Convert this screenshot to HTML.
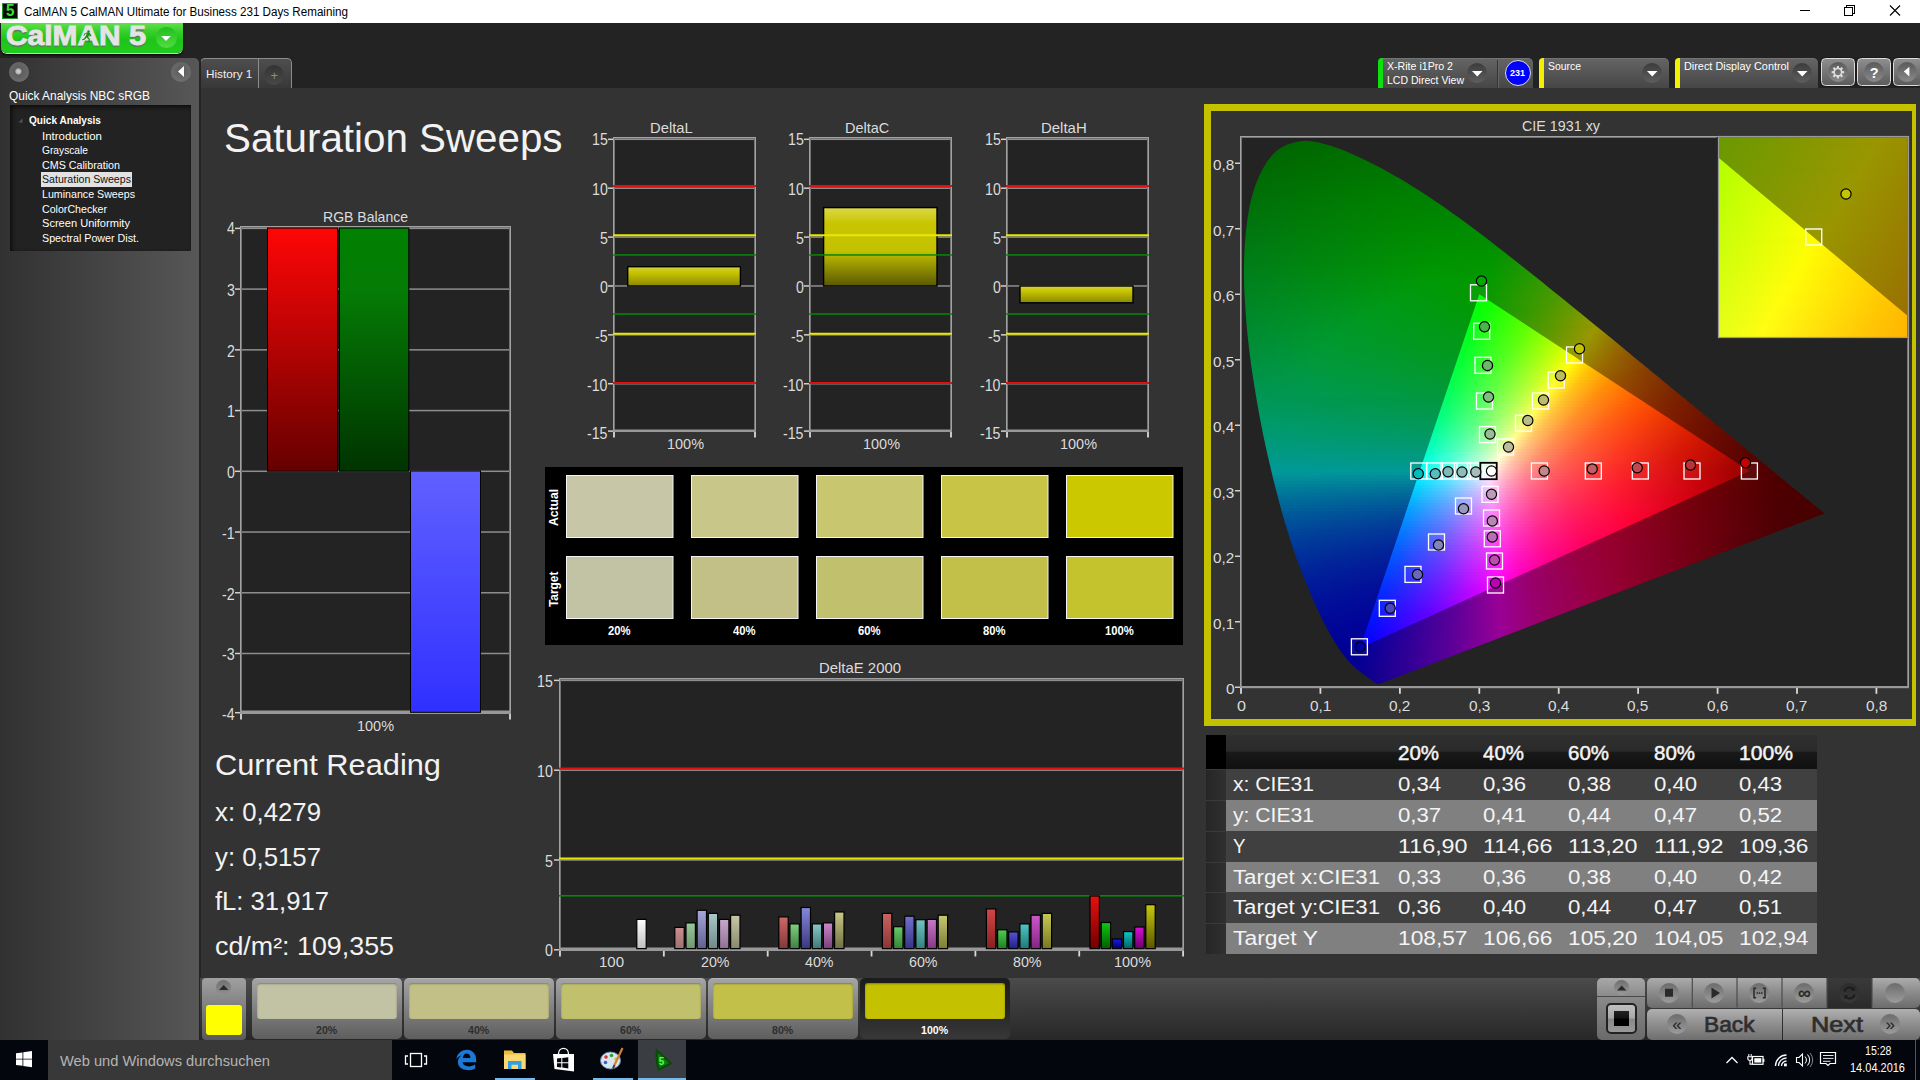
<!DOCTYPE html>
<html lang="en"><head><meta charset="utf-8"><title>CalMAN 5 Saturation Sweeps</title>
<style>
html,body{margin:0;padding:0;overflow:hidden;}
html{width:1920px;height:1080px;}
body{width:1920px;height:1080px;overflow:hidden;position:relative;background:#333333;font-family:"Liberation Sans",sans-serif;}
.t{position:absolute;white-space:nowrap;line-height:1;transform-origin:0 0;display:block;}
div{box-sizing:border-box;}
svg{position:absolute;left:0;top:0;overflow:visible;}
</style></head>
<body>
<div style="position:absolute;left:0px;top:0px;width:1920px;height:23px;background:#ffffff;"></div>
<div style="position:absolute;left:2px;top:3px;width:16px;height:16px;background:#0a0a0a;border:1px solid #1c9a1c;"><span class="t" style="left:2.5px;top:-1.5px;font-size:16px;font-weight:bold;color:#35e035;transform:scaleX(0.95);">5</span></div>
<span class="t" style="left:23.50px;top:5.59px;font-size:12.3px;color:#000;transform:scaleX(0.9461);">CalMAN 5 CalMAN Ultimate for Business 231 Days Remaining</span>
<svg width="1920" height="23" viewBox="0 0 1920 23"><g stroke="#000" stroke-width="1" fill="none" shape-rendering="crispEdges"><path d="M1799.5 10.5h10"/><path d="M1844.5 7.5h8v8h-8z M1846.5 7.5v-2h8v8h-2"/></g><path d="M1890 5.5l10 10M1900 5.5l-10 10" stroke="#000" stroke-width="1.1" fill="none"/></svg>
<div style="position:absolute;left:0px;top:23px;width:1920px;height:65px;background:#232323;"></div>
<div style="position:absolute;left:1px;top:23px;width:182px;height:30px;background:linear-gradient(#5fe04c 0%,#36cf2a 30%,#1ec41a 55%,#22cc1e 100%);border-radius:0 0 6px 6px;box-shadow:0 1px 0 #b8e8b0, 0 2px 2px #000;"></div>
<span class="t" style="left:6.40px;top:20.84px;font-size:28.3px;color:#e4e4e4;transform:scaleX(1.0563);font-weight:bold;-webkit-text-stroke:0.9px #e4e4e4;text-shadow:0 1.5px 1px #5a7a5a;">CalMAN</span>
<span class="t" style="left:129.00px;top:20.84px;font-size:28.3px;color:#e4e4e4;transform:scaleX(1.0928);font-weight:bold;-webkit-text-stroke:0.9px #e4e4e4;text-shadow:0 1.5px 1px #5a7a5a;">5</span>
<svg width="200" height="60"><path d="M88.5 30.2a1.3 1.3 0 1 0 .1 0zM84.5 33.5l3-1.2 2.5 1 1.5 2.5 -1 .5 -1.3-1.8 -1.2 2.2 2 2.5 -.8 3 -1-.3 .5-2.5 -2-1.8 -1.8 2 -2.6 .6 -.2-1 2-.7 2.3-3.6 .4-1.5 -1.6.6 -.9 1.8 -.9-.4z" fill="#1d8a18"/></svg>
<div style="position:absolute;left:156px;top:27px;width:20.5px;height:20.5px;border-radius:50%;background:linear-gradient(#1fbf1a,#52dc42);"></div>
<svg width="200" height="60"><path d="M161.2 36h9.6l-4.8 5z" fill="#fff"/></svg>
<div style="position:absolute;left:200px;top:58px;width:92px;height:30px;background:linear-gradient(#4e4e4e,#383838);border:1px solid #8c8c8c;border-bottom:none;border-radius:5px 5px 0 0;"></div>
<div style="position:absolute;left:258px;top:59px;width:1px;height:29px;background:#8c8c8c;"></div>
<span class="t" style="left:206.40px;top:68.38px;font-size:11.6px;color:#f0f0f0;transform:scaleX(1.0118);">History 1</span>
<div style="position:absolute;left:264.2px;top:65.2px;width:20px;height:20px;border-radius:50%;background:linear-gradient(#343434,#484848);"></div>
<span class="t" style="left:270.40px;top:69.00px;font-size:13px;color:#8c8c8c;transform:scaleX(1.0000);">+</span>
<div style="position:absolute;left:1378px;top:58px;width:155px;height:30px;background:linear-gradient(#646464,#464646);border-radius:5px 5px 0 0;border-top:1px solid #747474;"></div><div style="position:absolute;left:1378px;top:58px;width:5.3px;height:30px;background:#0ee00e;border-radius:4px 0 0 0;"></div><div style="position:absolute;left:1467px;top:63px;width:20px;height:20px;border-radius:50%;background:linear-gradient(#3c3c3c,#5e5e5e);"></div><svg width="1920" height="100"><path d="M1472 71h10.500l-5.250 5.500z" fill="#fff"/></svg>
<div style="position:absolute;left:1497px;top:60px;width:1px;height:28px;background:#333;"></div><div style="position:absolute;left:1498px;top:60px;width:1px;height:28px;background:#666;"></div>
<span class="t" style="left:1387.00px;top:61.27px;font-size:11.5px;color:#fff;transform:scaleX(0.9221);">X-Rite i1Pro 2</span>
<span class="t" style="left:1387.00px;top:75.27px;font-size:11.5px;color:#fff;transform:scaleX(0.9151);">LCD Direct View</span>
<div style="position:absolute;left:1504.5px;top:60px;width:26px;height:26px;border-radius:50%;background:#0000ff;border:1px solid #ddd;"></div>
<span class="t" style="left:1510.07px;top:68.46px;font-size:9.5px;color:#fff;transform:scaleX(0.9500);font-weight:bold;">231</span>
<div style="position:absolute;left:1539px;top:58px;width:130px;height:30px;background:linear-gradient(#646464,#464646);border-radius:5px 5px 0 0;border-top:1px solid #747474;"></div><div style="position:absolute;left:1539px;top:58px;width:5.3px;height:30px;background:#f2f200;border-radius:4px 0 0 0;"></div><div style="position:absolute;left:1642px;top:63px;width:20px;height:20px;border-radius:50%;background:linear-gradient(#3c3c3c,#5e5e5e);"></div><svg width="1920" height="100"><path d="M1647 71h10.500l-5.250 5.500z" fill="#fff"/></svg>
<span class="t" style="left:1547.50px;top:61.27px;font-size:11.5px;color:#fff;transform:scaleX(0.9058);">Source</span>
<div style="position:absolute;left:1675px;top:58px;width:143px;height:30px;background:linear-gradient(#646464,#464646);border-radius:5px 5px 0 0;border-top:1px solid #747474;"></div><div style="position:absolute;left:1675px;top:58px;width:5.3px;height:30px;background:#f2f200;border-radius:4px 0 0 0;"></div><div style="position:absolute;left:1792px;top:63px;width:20px;height:20px;border-radius:50%;background:linear-gradient(#3c3c3c,#5e5e5e);"></div><svg width="1920" height="100"><path d="M1797 71h10.500l-5.250 5.500z" fill="#fff"/></svg>
<span class="t" style="left:1683.50px;top:61.27px;font-size:11.5px;color:#fff;transform:scaleX(0.9444);">Direct Display Control</span>
<div style="position:absolute;left:1821px;top:58px;width:34px;height:28.3px;background:linear-gradient(#8e8e8e,#5c5c5c);border:1px solid #dcdcdc;border-radius:4.5px;box-shadow:0 0 0 1px #1a1a1a;"></div>
<div style="position:absolute;left:1828px;top:62px;width:20px;height:20px;border-radius:50%;background:linear-gradient(#5a5a5a,#8a8a8a);"></div>
<div style="position:absolute;left:1857px;top:58px;width:34px;height:28.3px;background:linear-gradient(#8e8e8e,#5c5c5c);border:1px solid #dcdcdc;border-radius:4.5px;box-shadow:0 0 0 1px #1a1a1a;"></div>
<div style="position:absolute;left:1864px;top:62px;width:20px;height:20px;border-radius:50%;background:linear-gradient(#5a5a5a,#8a8a8a);"></div>
<div style="position:absolute;left:1893px;top:58px;width:30px;height:28.3px;background:linear-gradient(#8e8e8e,#5c5c5c);border:1px solid #dcdcdc;border-radius:4.5px;box-shadow:0 0 0 1px #1a1a1a;"></div>
<div style="position:absolute;left:1896.8px;top:62px;width:20px;height:20px;border-radius:50%;background:linear-gradient(#5a5a5a,#8a8a8a);"></div>
<svg width="1920" height="100"><path fill-rule="evenodd" d="M1844.22 71.18L1844.22 73.22L1842.36 73.34L1841.86 74.55L1843.09 75.95L1841.65 77.39L1840.25 76.16L1839.04 76.66L1838.92 78.52L1836.88 78.52L1836.76 76.66L1835.55 76.16L1834.15 77.39L1832.71 75.95L1833.94 74.55L1833.44 73.34L1831.58 73.22L1831.58 71.18L1833.44 71.06L1833.94 69.85L1832.71 68.45L1834.15 67.01L1835.55 68.24L1836.76 67.74L1836.88 65.88L1838.92 65.88L1839.04 67.74L1840.25 68.24L1841.65 67.01L1843.09 68.45L1841.86 69.85L1842.36 71.06ZM1840.80 72.20a2.9 2.9 0 1 0 -5.8 0a2.9 2.9 0 1 0 5.8 0Z" fill="#dcdcdc"/><path d="M1909.4 66.8v9.6l-5.6-4.800z" fill="#fff"/></svg>
<span class="t" style="left:1869.77px;top:65.73px;font-size:14.5px;color:#fff;transform:scaleX(1.0000);font-weight:bold;">?</span>
<div style="position:absolute;left:199px;top:58px;width:2px;height:982px;background:#242424;"></div>
<div style="position:absolute;left:0px;top:58px;width:199px;height:982px;background:linear-gradient(90deg,#313131,#575757);border-radius:0 5px 0 0;"></div>
<div style="position:absolute;left:9px;top:62px;width:20px;height:20px;border-radius:50%;background:radial-gradient(circle at 47% 47%,#d8d8d8 0,#b0b0b0 17%,#5e5e5e 24%,#686868 60%,#7a7a7a 100%);"></div>
<div style="position:absolute;left:171px;top:62px;width:20px;height:20px;border-radius:50%;background:radial-gradient(circle at 50% 40%,#5a5a5a,#777);"></div>
<svg width="200" height="100"><path d="M184 66v11l-6-5.5z" fill="#fff"/></svg>
<span class="t" style="left:9.30px;top:90.34px;font-size:12px;color:#fff;transform:scaleX(0.9925);">Quick Analysis NBC sRGB</span>
<div style="position:absolute;left:9.5px;top:105.3px;width:181px;height:146px;background:#222222;box-shadow:inset 2px 2px 4px #0c0c0c;"></div>
<svg width="200" height="300"><path d="M22.5 118.5v4h-4z" fill="#555"/></svg>
<span class="t" style="left:29.00px;top:115.26px;font-size:10.8px;color:#fff;transform:scaleX(0.9344);font-weight:bold;">Quick Analysis</span>
<span class="t" style="left:42.00px;top:130.56px;font-size:10.8px;color:#fff;transform:scaleX(1.0629);">Introduction</span>
<span class="t" style="left:42.00px;top:145.16px;font-size:10.8px;color:#fff;transform:scaleX(0.9461);">Grayscale</span>
<span class="t" style="left:42.00px;top:159.76px;font-size:10.8px;color:#fff;transform:scaleX(0.9920);">CMS Calibration</span>
<div style="position:absolute;left:41px;top:172px;width:91px;height:15px;background:#e2e2e2;"></div>
<span class="t" style="left:42.00px;top:174.36px;font-size:10.8px;color:#111;transform:scaleX(0.9815);">Saturation Sweeps</span>
<span class="t" style="left:42.00px;top:188.96px;font-size:10.8px;color:#fff;transform:scaleX(0.9865);">Luminance Sweeps</span>
<span class="t" style="left:42.00px;top:203.56px;font-size:10.8px;color:#fff;transform:scaleX(0.9845);">ColorChecker</span>
<span class="t" style="left:42.00px;top:218.16px;font-size:10.8px;color:#fff;transform:scaleX(1.0253);">Screen Uniformity</span>
<span class="t" style="left:42.00px;top:232.76px;font-size:10.8px;color:#fff;transform:scaleX(0.9914);">Spectral Power Dist.</span>
<svg width="1920" height="1080" viewBox="0 0 1920 1080"><rect x="240" y="226" width="271" height="488" fill="#232323"/><rect x="240" y="652.74" width="271" height="1.5" fill="#8e8e8e"/><rect x="240" y="592.01" width="271" height="1.5" fill="#8e8e8e"/><rect x="240" y="531.28" width="271" height="1.5" fill="#8e8e8e"/><rect x="240" y="470.55" width="271" height="1.5" fill="#8e8e8e"/><rect x="240" y="409.82" width="271" height="1.5" fill="#8e8e8e"/><rect x="240" y="349.09" width="271" height="1.5" fill="#8e8e8e"/><rect x="240" y="288.36" width="271" height="1.5" fill="#8e8e8e"/><rect x="240" y="227.63" width="271" height="1.5" fill="#8e8e8e"/><rect x="240.5" y="226.5" width="270" height="487" fill="none" stroke="#a2a2a2" stroke-width="1"/><rect x="241.5" y="227.5" width="268" height="485" fill="none" stroke="#747474" stroke-width="1"/><rect x="240" y="710.5" width="271" height="3.5" fill="#989898"/><rect x="235" y="711.95" width="5" height="1.5" fill="#d0d0d0"/><rect x="235" y="652.74" width="5" height="1.5" fill="#d0d0d0"/><rect x="235" y="592.01" width="5" height="1.5" fill="#d0d0d0"/><rect x="235" y="531.28" width="5" height="1.5" fill="#d0d0d0"/><rect x="235" y="470.55" width="5" height="1.5" fill="#d0d0d0"/><rect x="235" y="409.82" width="5" height="1.5" fill="#d0d0d0"/><rect x="235" y="349.09" width="5" height="1.5" fill="#d0d0d0"/><rect x="235" y="288.36" width="5" height="1.5" fill="#d0d0d0"/><rect x="235" y="227.63" width="5" height="1.5" fill="#d0d0d0"/><rect x="240.10" y="714" width="1.8" height="5.5" fill="#d8d8d8"/><rect x="509.10" y="714" width="1.8" height="5.5" fill="#d8d8d8"/><defs><linearGradient id="gr" x1="0" y1="0" x2="0" y2="1"><stop offset="0" stop-color="#ff0606"/><stop offset="1" stop-color="#660000"/></linearGradient><linearGradient id="gg" x1="0" y1="0" x2="0" y2="1"><stop offset="0" stop-color="#008000"/><stop offset="0.25" stop-color="#057c05"/><stop offset="1" stop-color="#003300"/></linearGradient><linearGradient id="gb" x1="0" y1="0" x2="0" y2="1"><stop offset="0" stop-color="#6060ff"/><stop offset="1" stop-color="#3030ff"/></linearGradient><linearGradient id="gy" x1="0" y1="0" x2="0" y2="1"><stop offset="0" stop-color="#dcd94a"/><stop offset="0.2" stop-color="#c8c500"/><stop offset="0.55" stop-color="#c4c100"/><stop offset="1" stop-color="#5a5800"/></linearGradient><linearGradient id="gy2" x1="0" y1="0" x2="0" y2="1"><stop offset="0" stop-color="#d6d340"/><stop offset="0.3" stop-color="#c8c500"/><stop offset="1" stop-color="#8a8800"/></linearGradient></defs><rect x="267.5" y="228" width="70" height="243.2" fill="url(#gr)" stroke="#000" stroke-width="1"/><rect x="339.3" y="228" width="69.5" height="243.2" fill="url(#gg)" stroke="#000" stroke-width="1"/><rect x="410.5" y="471" width="70" height="241.3" fill="url(#gb)" stroke="#000" stroke-width="1"/><rect x="613" y="137" width="143" height="295" fill="#232323"/><rect x="613" y="383.00" width="143" height="1.5" fill="#8e8e8e"/><rect x="613" y="334.11" width="143" height="1.5" fill="#8e8e8e"/><rect x="613" y="285.22" width="143" height="1.5" fill="#8e8e8e"/><rect x="613" y="236.33" width="143" height="1.5" fill="#8e8e8e"/><rect x="613" y="187.44" width="143" height="1.5" fill="#8e8e8e"/><rect x="613" y="138.55" width="143" height="1.5" fill="#8e8e8e"/><rect x="613.5" y="137.5" width="142" height="294" fill="none" stroke="#a2a2a2" stroke-width="1"/><rect x="614.5" y="138.5" width="140" height="292" fill="none" stroke="#747474" stroke-width="1"/><rect x="613" y="429.5" width="143" height="2.5" fill="#989898"/><rect x="608" y="138.55" width="5" height="1.5" fill="#d0d0d0"/><rect x="608" y="187.44" width="5" height="1.5" fill="#d0d0d0"/><rect x="608" y="236.33" width="5" height="1.5" fill="#d0d0d0"/><rect x="608" y="285.22" width="5" height="1.5" fill="#d0d0d0"/><rect x="608" y="334.11" width="5" height="1.5" fill="#d0d0d0"/><rect x="608" y="383.00" width="5" height="1.5" fill="#d0d0d0"/><rect x="608" y="430.35" width="5" height="1.5" fill="#d0d0d0"/><rect x="613.10" y="432" width="1.8" height="5.5" fill="#d8d8d8"/><rect x="754.10" y="432" width="1.8" height="5.5" fill="#d8d8d8"/><rect x="627.7" y="266.7" width="112.69999999999993" height="19.30000000000001" fill="url(#gy2)" stroke="#000" stroke-width="1.4"/><rect x="613" y="185.00" width="143" height="2" fill="#e01010"/><rect x="613" y="382.00" width="143" height="2" fill="#e01010"/><rect x="613" y="234.25" width="143" height="2" fill="#e8e800"/><rect x="613" y="332.75" width="143" height="2" fill="#e8e800"/><rect x="613" y="254.20" width="143" height="1.5" fill="#088808"/><rect x="613" y="313.30" width="143" height="1.5" fill="#088808"/><rect x="809" y="137" width="143" height="295" fill="#232323"/><rect x="809" y="383.00" width="143" height="1.5" fill="#8e8e8e"/><rect x="809" y="334.11" width="143" height="1.5" fill="#8e8e8e"/><rect x="809" y="285.22" width="143" height="1.5" fill="#8e8e8e"/><rect x="809" y="236.33" width="143" height="1.5" fill="#8e8e8e"/><rect x="809" y="187.44" width="143" height="1.5" fill="#8e8e8e"/><rect x="809" y="138.55" width="143" height="1.5" fill="#8e8e8e"/><rect x="809.5" y="137.5" width="142" height="294" fill="none" stroke="#a2a2a2" stroke-width="1"/><rect x="810.5" y="138.5" width="140" height="292" fill="none" stroke="#747474" stroke-width="1"/><rect x="809" y="429.5" width="143" height="2.5" fill="#989898"/><rect x="804" y="138.55" width="5" height="1.5" fill="#d0d0d0"/><rect x="804" y="187.44" width="5" height="1.5" fill="#d0d0d0"/><rect x="804" y="236.33" width="5" height="1.5" fill="#d0d0d0"/><rect x="804" y="285.22" width="5" height="1.5" fill="#d0d0d0"/><rect x="804" y="334.11" width="5" height="1.5" fill="#d0d0d0"/><rect x="804" y="383.00" width="5" height="1.5" fill="#d0d0d0"/><rect x="804" y="430.35" width="5" height="1.5" fill="#d0d0d0"/><rect x="809.10" y="432" width="1.8" height="5.5" fill="#d8d8d8"/><rect x="950.10" y="432" width="1.8" height="5.5" fill="#d8d8d8"/><rect x="823.6" y="207.6" width="113.39999999999998" height="78.4" fill="url(#gy)" stroke="#000" stroke-width="1.4"/><rect x="809" y="185.00" width="143" height="2" fill="#e01010"/><rect x="809" y="382.00" width="143" height="2" fill="#e01010"/><rect x="809" y="234.25" width="143" height="2" fill="#e8e800"/><rect x="809" y="332.75" width="143" height="2" fill="#e8e800"/><rect x="809" y="254.20" width="143" height="1.5" fill="#088808"/><rect x="809" y="313.30" width="143" height="1.5" fill="#088808"/><rect x="1006" y="137" width="143" height="295" fill="#232323"/><rect x="1006" y="383.00" width="143" height="1.5" fill="#8e8e8e"/><rect x="1006" y="334.11" width="143" height="1.5" fill="#8e8e8e"/><rect x="1006" y="285.22" width="143" height="1.5" fill="#8e8e8e"/><rect x="1006" y="236.33" width="143" height="1.5" fill="#8e8e8e"/><rect x="1006" y="187.44" width="143" height="1.5" fill="#8e8e8e"/><rect x="1006" y="138.55" width="143" height="1.5" fill="#8e8e8e"/><rect x="1006.5" y="137.5" width="142" height="294" fill="none" stroke="#a2a2a2" stroke-width="1"/><rect x="1007.5" y="138.5" width="140" height="292" fill="none" stroke="#747474" stroke-width="1"/><rect x="1006" y="429.5" width="143" height="2.5" fill="#989898"/><rect x="1001" y="138.55" width="5" height="1.5" fill="#d0d0d0"/><rect x="1001" y="187.44" width="5" height="1.5" fill="#d0d0d0"/><rect x="1001" y="236.33" width="5" height="1.5" fill="#d0d0d0"/><rect x="1001" y="285.22" width="5" height="1.5" fill="#d0d0d0"/><rect x="1001" y="334.11" width="5" height="1.5" fill="#d0d0d0"/><rect x="1001" y="383.00" width="5" height="1.5" fill="#d0d0d0"/><rect x="1001" y="430.35" width="5" height="1.5" fill="#d0d0d0"/><rect x="1006.10" y="432" width="1.8" height="5.5" fill="#d8d8d8"/><rect x="1147.10" y="432" width="1.8" height="5.5" fill="#d8d8d8"/><rect x="1020" y="286" width="113" height="16.80000000000001" fill="url(#gy2)" stroke="#000" stroke-width="1.4"/><rect x="1006" y="185.00" width="143" height="2" fill="#e01010"/><rect x="1006" y="382.00" width="143" height="2" fill="#e01010"/><rect x="1006" y="234.25" width="143" height="2" fill="#e8e800"/><rect x="1006" y="332.75" width="143" height="2" fill="#e8e800"/><rect x="1006" y="254.20" width="143" height="1.5" fill="#088808"/><rect x="1006" y="313.30" width="143" height="1.5" fill="#088808"/><rect x="545" y="467" width="638" height="178" fill="#000"/><rect x="566.5" y="475.5" width="106.5" height="62" fill="#c7c7a8" stroke="#f4f4f4" stroke-width="1"/><rect x="566.5" y="556.5" width="106.5" height="62" fill="#c2c2a4" stroke="#f4f4f4" stroke-width="1"/><rect x="691.5" y="475.5" width="106.5" height="62" fill="#c8c688" stroke="#f4f4f4" stroke-width="1"/><rect x="691.5" y="556.5" width="106.5" height="62" fill="#c2c086" stroke="#f4f4f4" stroke-width="1"/><rect x="816.5" y="475.5" width="106.5" height="62" fill="#c8c66e" stroke="#f4f4f4" stroke-width="1"/><rect x="816.5" y="556.5" width="106.5" height="62" fill="#c1c06c" stroke="#f4f4f4" stroke-width="1"/><rect x="941.5" y="475.5" width="106.5" height="62" fill="#c8c446" stroke="#f4f4f4" stroke-width="1"/><rect x="941.5" y="556.5" width="106.5" height="62" fill="#c2c048" stroke="#f4f4f4" stroke-width="1"/><rect x="1066.5" y="475.5" width="106.5" height="62" fill="#cbc800" stroke="#f4f4f4" stroke-width="1"/><rect x="1066.5" y="556.5" width="106.5" height="62" fill="#c4c22d" stroke="#f4f4f4" stroke-width="1"/><rect x="559" y="678" width="625" height="273" fill="#232323"/><rect x="559" y="679.65" width="625" height="1.5" fill="#8e8e8e"/><rect x="559" y="769.45" width="625" height="1.5" fill="#8e8e8e"/><rect x="559" y="859.25" width="625" height="1.5" fill="#8e8e8e"/><rect x="559.5" y="678.5" width="624" height="272" fill="none" stroke="#a2a2a2" stroke-width="1"/><rect x="560.5" y="679.5" width="622" height="270" fill="none" stroke="#747474" stroke-width="1"/><rect x="559" y="947.5" width="625" height="3.5" fill="#989898"/><rect x="554" y="679.65" width="5" height="1.5" fill="#d0d0d0"/><rect x="554" y="769.45" width="5" height="1.5" fill="#d0d0d0"/><rect x="554" y="859.25" width="5" height="1.5" fill="#d0d0d0"/><rect x="554" y="949.05" width="5" height="1.5" fill="#d0d0d0"/><rect x="559.10" y="951" width="1.8" height="5.5" fill="#d8d8d8"/><rect x="662.95" y="951" width="1.8" height="5.5" fill="#d8d8d8"/><rect x="766.80" y="951" width="1.8" height="5.5" fill="#d8d8d8"/><rect x="870.65" y="951" width="1.8" height="5.5" fill="#d8d8d8"/><rect x="974.50" y="951" width="1.8" height="5.5" fill="#d8d8d8"/><rect x="1078.35" y="951" width="1.8" height="5.5" fill="#d8d8d8"/><rect x="1182.20" y="951" width="1.8" height="5.5" fill="#d8d8d8"/><rect x="559" y="767.50" width="625" height="2" fill="#e01010"/><rect x="559" y="857.50" width="625" height="2" fill="#e8e800"/><rect x="559" y="895.00" width="625" height="1.6" fill="#088808"/><linearGradient id="b1" x1="0" y1="0" x2="0" y2="1"><stop offset="0" stop-color="#ffffff"/><stop offset="1" stop-color="#c0c0c0"/></linearGradient><rect x="636.8" y="919.4" width="9.4" height="29.2" fill="url(#b1)" stroke="#000" stroke-width="1.2"/><linearGradient id="b2" x1="0" y1="0" x2="0" y2="1"><stop offset="0" stop-color="#cc9090"/><stop offset="1" stop-color="#a07070"/></linearGradient><rect x="674.8" y="927.4" width="9.4" height="21.2" fill="url(#b2)" stroke="#000" stroke-width="1.2"/><linearGradient id="b3" x1="0" y1="0" x2="0" y2="1"><stop offset="0" stop-color="#98c898"/><stop offset="1" stop-color="#709870"/></linearGradient><rect x="686.0" y="922.9" width="9.4" height="25.7" fill="url(#b3)" stroke="#000" stroke-width="1.2"/><linearGradient id="b4" x1="0" y1="0" x2="0" y2="1"><stop offset="0" stop-color="#a8a8d8"/><stop offset="1" stop-color="#606090"/></linearGradient><rect x="697.1" y="910.3" width="9.4" height="38.3" fill="url(#b4)" stroke="#000" stroke-width="1.2"/><linearGradient id="b5" x1="0" y1="0" x2="0" y2="1"><stop offset="0" stop-color="#a8c8c8"/><stop offset="1" stop-color="#708888"/></linearGradient><rect x="708.3" y="913.4" width="9.4" height="35.2" fill="url(#b5)" stroke="#000" stroke-width="1.2"/><linearGradient id="b6" x1="0" y1="0" x2="0" y2="1"><stop offset="0" stop-color="#c8a8cc"/><stop offset="1" stop-color="#907094"/></linearGradient><rect x="719.5" y="919.4" width="9.4" height="29.2" fill="url(#b6)" stroke="#000" stroke-width="1.2"/><linearGradient id="b7" x1="0" y1="0" x2="0" y2="1"><stop offset="0" stop-color="#c8c8a8"/><stop offset="1" stop-color="#88886c"/></linearGradient><rect x="730.6" y="915.2" width="9.4" height="33.4" fill="url(#b7)" stroke="#000" stroke-width="1.2"/><linearGradient id="b8" x1="0" y1="0" x2="0" y2="1"><stop offset="0" stop-color="#d06868"/><stop offset="1" stop-color="#803838"/></linearGradient><rect x="778.8" y="916.9" width="9.4" height="31.7" fill="url(#b8)" stroke="#000" stroke-width="1.2"/><linearGradient id="b9" x1="0" y1="0" x2="0" y2="1"><stop offset="0" stop-color="#80d080"/><stop offset="1" stop-color="#408040"/></linearGradient><rect x="789.9" y="923.9" width="9.4" height="24.7" fill="url(#b9)" stroke="#000" stroke-width="1.2"/><linearGradient id="b10" x1="0" y1="0" x2="0" y2="1"><stop offset="0" stop-color="#8888dc"/><stop offset="1" stop-color="#383880"/></linearGradient><rect x="801.1" y="907.5" width="9.4" height="41.1" fill="url(#b10)" stroke="#000" stroke-width="1.2"/><linearGradient id="b11" x1="0" y1="0" x2="0" y2="1"><stop offset="0" stop-color="#88c8c8"/><stop offset="1" stop-color="#407878"/></linearGradient><rect x="812.3" y="923.9" width="9.4" height="24.7" fill="url(#b11)" stroke="#000" stroke-width="1.2"/><linearGradient id="b12" x1="0" y1="0" x2="0" y2="1"><stop offset="0" stop-color="#cc88cc"/><stop offset="1" stop-color="#784078"/></linearGradient><rect x="823.4" y="922.9" width="9.4" height="25.7" fill="url(#b12)" stroke="#000" stroke-width="1.2"/><linearGradient id="b13" x1="0" y1="0" x2="0" y2="1"><stop offset="0" stop-color="#c8c888"/><stop offset="1" stop-color="#707040"/></linearGradient><rect x="834.6" y="912.0" width="9.4" height="36.6" fill="url(#b13)" stroke="#000" stroke-width="1.2"/><linearGradient id="b14" x1="0" y1="0" x2="0" y2="1"><stop offset="0" stop-color="#cc6262"/><stop offset="1" stop-color="#8a3434"/></linearGradient><rect x="882.4" y="913.4" width="9.4" height="35.2" fill="url(#b14)" stroke="#000" stroke-width="1.2"/><linearGradient id="b15" x1="0" y1="0" x2="0" y2="1"><stop offset="0" stop-color="#6aca6a"/><stop offset="1" stop-color="#348434"/></linearGradient><rect x="893.6" y="926.7" width="9.4" height="21.9" fill="url(#b15)" stroke="#000" stroke-width="1.2"/><linearGradient id="b16" x1="0" y1="0" x2="0" y2="1"><stop offset="0" stop-color="#7272cc"/><stop offset="1" stop-color="#34348a"/></linearGradient><rect x="904.7" y="916.2" width="9.4" height="32.4" fill="url(#b16)" stroke="#000" stroke-width="1.2"/><linearGradient id="b17" x1="0" y1="0" x2="0" y2="1"><stop offset="0" stop-color="#70c4c4"/><stop offset="1" stop-color="#348080"/></linearGradient><rect x="915.9" y="919.7" width="9.4" height="28.9" fill="url(#b17)" stroke="#000" stroke-width="1.2"/><linearGradient id="b18" x1="0" y1="0" x2="0" y2="1"><stop offset="0" stop-color="#c878c8"/><stop offset="1" stop-color="#843884"/></linearGradient><rect x="927.1" y="919.4" width="9.4" height="29.2" fill="url(#b18)" stroke="#000" stroke-width="1.2"/><linearGradient id="b19" x1="0" y1="0" x2="0" y2="1"><stop offset="0" stop-color="#c8c872"/><stop offset="1" stop-color="#7c7c34"/></linearGradient><rect x="938.2" y="915.2" width="9.4" height="33.4" fill="url(#b19)" stroke="#000" stroke-width="1.2"/><linearGradient id="b20" x1="0" y1="0" x2="0" y2="1"><stop offset="0" stop-color="#d24646"/><stop offset="1" stop-color="#8a2020"/></linearGradient><rect x="986.4" y="908.9" width="9.4" height="39.7" fill="url(#b20)" stroke="#000" stroke-width="1.2"/><linearGradient id="b21" x1="0" y1="0" x2="0" y2="1"><stop offset="0" stop-color="#50cc50"/><stop offset="1" stop-color="#208020"/></linearGradient><rect x="997.6" y="929.8" width="9.4" height="18.8" fill="url(#b21)" stroke="#000" stroke-width="1.2"/><linearGradient id="b22" x1="0" y1="0" x2="0" y2="1"><stop offset="0" stop-color="#5454d2"/><stop offset="1" stop-color="#20208a"/></linearGradient><rect x="1008.7" y="931.9" width="9.4" height="16.7" fill="url(#b22)" stroke="#000" stroke-width="1.2"/><linearGradient id="b23" x1="0" y1="0" x2="0" y2="1"><stop offset="0" stop-color="#50c6c6"/><stop offset="1" stop-color="#207878"/></linearGradient><rect x="1019.9" y="923.9" width="9.4" height="24.7" fill="url(#b23)" stroke="#000" stroke-width="1.2"/><linearGradient id="b24" x1="0" y1="0" x2="0" y2="1"><stop offset="0" stop-color="#cc58cc"/><stop offset="1" stop-color="#842484"/></linearGradient><rect x="1031.0" y="915.2" width="9.4" height="33.4" fill="url(#b24)" stroke="#000" stroke-width="1.2"/><linearGradient id="b25" x1="0" y1="0" x2="0" y2="1"><stop offset="0" stop-color="#c8c858"/><stop offset="1" stop-color="#787820"/></linearGradient><rect x="1042.2" y="913.4" width="9.4" height="35.2" fill="url(#b25)" stroke="#000" stroke-width="1.2"/><linearGradient id="b26" x1="0" y1="0" x2="0" y2="1"><stop offset="0" stop-color="#e81010"/><stop offset="1" stop-color="#700000"/></linearGradient><rect x="1090.0" y="896.0" width="9.4" height="52.6" fill="url(#b26)" stroke="#000" stroke-width="1.2"/><linearGradient id="b27" x1="0" y1="0" x2="0" y2="1"><stop offset="0" stop-color="#10c810"/><stop offset="1" stop-color="#006000"/></linearGradient><rect x="1101.2" y="922.5" width="9.4" height="26.1" fill="url(#b27)" stroke="#000" stroke-width="1.2"/><linearGradient id="b28" x1="0" y1="0" x2="0" y2="1"><stop offset="0" stop-color="#1818e8"/><stop offset="1" stop-color="#000070"/></linearGradient><rect x="1112.3" y="938.9" width="9.4" height="9.7" fill="url(#b28)" stroke="#000" stroke-width="1.2"/><linearGradient id="b29" x1="0" y1="0" x2="0" y2="1"><stop offset="0" stop-color="#10c8c8"/><stop offset="1" stop-color="#006060"/></linearGradient><rect x="1123.5" y="931.6" width="9.4" height="17.0" fill="url(#b29)" stroke="#000" stroke-width="1.2"/><linearGradient id="b30" x1="0" y1="0" x2="0" y2="1"><stop offset="0" stop-color="#d810d8"/><stop offset="1" stop-color="#680068"/></linearGradient><rect x="1134.7" y="927.0" width="9.4" height="21.6" fill="url(#b30)" stroke="#000" stroke-width="1.2"/><linearGradient id="b31" x1="0" y1="0" x2="0" y2="1"><stop offset="0" stop-color="#c8c810"/><stop offset="1" stop-color="#585800"/></linearGradient><rect x="1145.8" y="904.7" width="9.4" height="43.9" fill="url(#b31)" stroke="#000" stroke-width="1.2"/></svg>
<span class="t" style="left:223.50px;top:118.12px;font-size:40.5px;color:#f2f2f2;transform:scaleX(0.9957);">Saturation Sweeps</span>
<span class="t" style="left:222.18px;top:706.59px;font-size:15.6px;color:#dcdcdc;transform:scaleX(0.9100);">-4</span>
<span class="t" style="left:222.18px;top:647.38px;font-size:15.6px;color:#dcdcdc;transform:scaleX(0.9100);">-3</span>
<span class="t" style="left:222.18px;top:586.65px;font-size:15.6px;color:#dcdcdc;transform:scaleX(0.9100);">-2</span>
<span class="t" style="left:222.18px;top:525.92px;font-size:15.6px;color:#dcdcdc;transform:scaleX(0.9100);">-1</span>
<span class="t" style="left:226.90px;top:465.19px;font-size:15.6px;color:#dcdcdc;transform:scaleX(0.9100);">0</span>
<span class="t" style="left:226.90px;top:404.46px;font-size:15.6px;color:#dcdcdc;transform:scaleX(0.9100);">1</span>
<span class="t" style="left:226.90px;top:343.73px;font-size:15.6px;color:#dcdcdc;transform:scaleX(0.9100);">2</span>
<span class="t" style="left:226.90px;top:283.00px;font-size:15.6px;color:#dcdcdc;transform:scaleX(0.9100);">3</span>
<span class="t" style="left:226.90px;top:221.17px;font-size:15.6px;color:#dcdcdc;transform:scaleX(0.9100);">4</span>
<span class="t" style="left:323.30px;top:209.30px;font-size:15px;color:#dcdcdc;transform:scaleX(0.9353);">RGB Balance</span>
<span class="t" style="left:356.90px;top:717.60px;font-size:15px;color:#dcdcdc;transform:scaleX(0.9644);">100%</span>
<span class="t" style="left:592.01px;top:132.49px;font-size:15.6px;color:#dcdcdc;transform:scaleX(0.9100);">15</span>
<span class="t" style="left:592.01px;top:182.08px;font-size:15.6px;color:#dcdcdc;transform:scaleX(0.9100);">10</span>
<span class="t" style="left:599.90px;top:230.97px;font-size:15.6px;color:#dcdcdc;transform:scaleX(0.9100);">5</span>
<span class="t" style="left:599.90px;top:279.86px;font-size:15.6px;color:#dcdcdc;transform:scaleX(0.9100);">0</span>
<span class="t" style="left:595.18px;top:328.75px;font-size:15.6px;color:#dcdcdc;transform:scaleX(0.9100);">-5</span>
<span class="t" style="left:587.28px;top:377.64px;font-size:15.6px;color:#dcdcdc;transform:scaleX(0.9100);">-10</span>
<span class="t" style="left:587.28px;top:426.39px;font-size:15.6px;color:#dcdcdc;transform:scaleX(0.9100);">-15</span>
<span class="t" style="left:649.65px;top:120.10px;font-size:15px;color:#dcdcdc;transform:scaleX(0.9847);">DeltaL</span>
<span class="t" style="left:666.80px;top:436.10px;font-size:15px;color:#dcdcdc;transform:scaleX(0.9644);">100%</span>
<span class="t" style="left:788.01px;top:132.49px;font-size:15.6px;color:#dcdcdc;transform:scaleX(0.9100);">15</span>
<span class="t" style="left:788.01px;top:182.08px;font-size:15.6px;color:#dcdcdc;transform:scaleX(0.9100);">10</span>
<span class="t" style="left:795.90px;top:230.97px;font-size:15.6px;color:#dcdcdc;transform:scaleX(0.9100);">5</span>
<span class="t" style="left:795.90px;top:279.86px;font-size:15.6px;color:#dcdcdc;transform:scaleX(0.9100);">0</span>
<span class="t" style="left:791.18px;top:328.75px;font-size:15.6px;color:#dcdcdc;transform:scaleX(0.9100);">-5</span>
<span class="t" style="left:783.28px;top:377.64px;font-size:15.6px;color:#dcdcdc;transform:scaleX(0.9100);">-10</span>
<span class="t" style="left:783.28px;top:426.39px;font-size:15.6px;color:#dcdcdc;transform:scaleX(0.9100);">-15</span>
<span class="t" style="left:845.15px;top:120.10px;font-size:15px;color:#dcdcdc;transform:scaleX(0.9662);">DeltaC</span>
<span class="t" style="left:862.80px;top:436.10px;font-size:15px;color:#dcdcdc;transform:scaleX(0.9644);">100%</span>
<span class="t" style="left:985.01px;top:132.49px;font-size:15.6px;color:#dcdcdc;transform:scaleX(0.9100);">15</span>
<span class="t" style="left:985.01px;top:182.08px;font-size:15.6px;color:#dcdcdc;transform:scaleX(0.9100);">10</span>
<span class="t" style="left:992.90px;top:230.97px;font-size:15.6px;color:#dcdcdc;transform:scaleX(0.9100);">5</span>
<span class="t" style="left:992.90px;top:279.86px;font-size:15.6px;color:#dcdcdc;transform:scaleX(0.9100);">0</span>
<span class="t" style="left:988.18px;top:328.75px;font-size:15.6px;color:#dcdcdc;transform:scaleX(0.9100);">-5</span>
<span class="t" style="left:980.28px;top:377.64px;font-size:15.6px;color:#dcdcdc;transform:scaleX(0.9100);">-10</span>
<span class="t" style="left:980.28px;top:426.39px;font-size:15.6px;color:#dcdcdc;transform:scaleX(0.9100);">-15</span>
<span class="t" style="left:1040.85px;top:120.10px;font-size:15px;color:#dcdcdc;transform:scaleX(0.9967);">DeltaH</span>
<span class="t" style="left:1059.80px;top:436.10px;font-size:15px;color:#dcdcdc;transform:scaleX(0.9644);">100%</span>
<span class="t" style="left:608.44px;top:625.22px;font-size:12.5px;color:#fff;transform:scaleX(0.9000);font-weight:bold;">20%</span>
<span class="t" style="left:733.44px;top:625.22px;font-size:12.5px;color:#fff;transform:scaleX(0.9000);font-weight:bold;">40%</span>
<span class="t" style="left:858.44px;top:625.22px;font-size:12.5px;color:#fff;transform:scaleX(0.9000);font-weight:bold;">60%</span>
<span class="t" style="left:983.44px;top:625.22px;font-size:12.5px;color:#fff;transform:scaleX(0.9000);font-weight:bold;">80%</span>
<span class="t" style="left:1105.31px;top:625.22px;font-size:12.5px;color:#fff;transform:scaleX(0.9000);font-weight:bold;">100%</span>
<span class="t" style="left:547.5px;top:526px;font-size:12.5px;font-weight:bold;color:#fff;transform:rotate(-90deg) scaleX(0.97);transform-origin:0 0;">Actual</span>
<span class="t" style="left:547.5px;top:606.5px;font-size:12.5px;font-weight:bold;color:#fff;transform:rotate(-90deg) scaleX(0.95);transform-origin:0 0;">Target</span>
<span class="t" style="left:536.91px;top:673.69px;font-size:15.6px;color:#dcdcdc;transform:scaleX(0.9100);">15</span>
<span class="t" style="left:536.91px;top:763.89px;font-size:15.6px;color:#dcdcdc;transform:scaleX(0.9100);">10</span>
<span class="t" style="left:544.80px;top:853.69px;font-size:15.6px;color:#dcdcdc;transform:scaleX(0.9100);">5</span>
<span class="t" style="left:544.80px;top:943.49px;font-size:15.6px;color:#dcdcdc;transform:scaleX(0.9100);">0</span>
<span class="t" style="left:819.00px;top:659.80px;font-size:15px;color:#dcdcdc;transform:scaleX(0.9931);">DeltaE 2000</span>
<span class="t" style="left:598.50px;top:954.40px;font-size:15px;color:#dcdcdc;transform:scaleX(0.9988);">100</span>
<span class="t" style="left:701.10px;top:954.40px;font-size:15px;color:#dcdcdc;transform:scaleX(0.9493);">20%</span>
<span class="t" style="left:804.95px;top:954.40px;font-size:15px;color:#dcdcdc;transform:scaleX(0.9493);">40%</span>
<span class="t" style="left:908.80px;top:954.40px;font-size:15px;color:#dcdcdc;transform:scaleX(0.9493);">60%</span>
<span class="t" style="left:1012.65px;top:954.40px;font-size:15px;color:#dcdcdc;transform:scaleX(0.9493);">80%</span>
<span class="t" style="left:1113.55px;top:954.40px;font-size:15px;color:#dcdcdc;transform:scaleX(0.9644);">100%</span>
<span class="t" style="left:215.00px;top:749.61px;font-size:30px;color:#f2f2f2;transform:scaleX(1.0267);">Current Reading</span>
<span class="t" style="left:215.00px;top:799.49px;font-size:26px;color:#f2f2f2;transform:scaleX(0.9909);">x: 0,4279</span>
<span class="t" style="left:215.00px;top:843.99px;font-size:26px;color:#f2f2f2;transform:scaleX(0.9909);">y: 0,5157</span>
<span class="t" style="left:215.00px;top:888.49px;font-size:26px;color:#f2f2f2;transform:scaleX(0.9857);">fL: 31,917</span>
<span class="t" style="left:215.00px;top:932.99px;font-size:26px;color:#f2f2f2;transform:scaleX(1.0321);">cd/m²: 109,355</span>
<div style="position:absolute;left:1204px;top:104px;width:712px;height:622px;border-style:solid;border-color:#c4c100;border-width:7.3px 4px 7.4px 7px;background:#333;"></div>
<style>.cl{position:absolute;left:1241px;top:137px;width:667px;height:550px;}.cl i{position:absolute;display:block;}</style>
<div style="position:absolute;left:1241px;top:137px;width:667px;height:550px;background:#232323;"></div>
<div class="cl" style="clip-path:polygon(138.3px 547.0px,138.3px 547.0px,138.2px 547.0px,138.2px 547.1px,138.1px 547.1px,138.0px 547.1px,138.0px 547.1px,137.9px 547.1px,137.8px 547.1px,137.7px 547.1px,137.7px 547.2px,137.6px 547.2px,137.5px 547.2px,137.4px 547.2px,137.2px 547.2px,137.1px 547.2px,136.9px 547.1px,136.7px 547.1px,136.5px 547.1px,136.3px 547.0px,136.1px 547.0px,136.0px 546.9px,135.8px 546.8px,135.6px 546.7px,135.5px 546.6px,135.3px 546.5px,135.1px 546.4px,134.9px 546.3px,134.6px 546.1px,134.4px 546.0px,134.2px 545.8px,133.9px 545.6px,133.6px 545.4px,133.3px 545.2px,132.9px 544.9px,132.6px 544.7px,132.2px 544.4px,131.8px 544.1px,131.4px 543.8px,131.0px 543.5px,130.6px 543.2px,130.1px 542.8px,129.6px 542.5px,129.1px 542.1px,128.6px 541.7px,128.0px 541.3px,127.3px 540.8px,126.6px 540.3px,125.9px 539.8px,125.2px 539.3px,124.4px 538.7px,123.6px 538.1px,122.7px 537.5px,121.8px 536.9px,120.9px 536.2px,119.9px 535.4px,118.9px 534.6px,117.9px 533.8px,116.7px 532.9px,115.6px 531.9px,114.4px 530.8px,113.1px 529.7px,111.9px 528.6px,110.6px 527.3px,109.1px 525.9px,107.6px 524.2px,106.0px 522.3px,104.3px 520.2px,102.5px 517.9px,100.6px 515.3px,98.6px 512.4px,96.5px 509.3px,94.3px 505.9px,92.0px 502.2px,89.6px 498.1px,87.1px 493.4px,84.4px 488.4px,81.6px 482.9px,78.7px 477.0px,75.7px 470.5px,72.5px 463.4px,69.2px 455.7px,65.6px 447.4px,62.0px 438.6px,58.2px 429.1px,54.6px 418.8px,50.9px 407.8px,47.2px 396.1px,43.4px 383.7px,39.7px 370.7px,36.1px 357.1px,32.4px 342.7px,28.8px 327.6px,25.2px 311.9px,21.8px 296.0px,18.7px 280.0px,15.8px 263.8px,13.0px 247.1px,10.5px 230.4px,8.3px 213.8px,6.5px 197.6px,5.1px 181.8px,4.0px 166.1px,3.2px 150.6px,2.9px 135.7px,3.1px 121.4px,3.8px 107.7px,4.9px 94.4px,6.5px 81.7px,8.5px 69.8px,11.0px 58.9px,14.1px 49.0px,17.7px 39.9px,21.8px 31.7px,26.2px 24.5px,30.9px 18.4px,35.9px 13.6px,41.4px 9.9px,47.1px 7.2px,53.0px 5.4px,59.0px 4.2px,65.1px 3.8px,71.4px 4.4px,77.8px 5.6px,84.3px 7.3px,90.7px 9.1px,97.1px 11.2px,103.6px 13.7px,110.1px 16.5px,116.6px 19.5px,122.9px 22.4px,129.1px 25.4px,135.2px 28.5px,141.3px 31.7px,147.3px 35.0px,153.2px 38.4px,159.1px 41.8px,165.0px 45.3px,170.8px 48.9px,176.6px 52.5px,182.4px 56.2px,188.2px 60.0px,193.9px 63.9px,199.7px 67.8px,205.4px 71.8px,211.1px 75.9px,216.8px 80.0px,222.5px 84.1px,228.2px 88.3px,233.9px 92.6px,239.6px 96.8px,245.2px 101.1px,250.9px 105.5px,256.6px 109.9px,262.2px 114.3px,267.9px 118.7px,273.6px 123.2px,279.3px 127.7px,285.0px 132.2px,290.7px 136.7px,296.4px 141.3px,302.0px 145.8px,307.7px 150.4px,313.3px 155.0px,319.0px 159.5px,324.6px 164.1px,330.3px 168.7px,335.9px 173.3px,341.5px 177.8px,347.2px 182.4px,352.7px 187.0px,358.3px 191.5px,363.9px 196.1px,369.4px 200.6px,374.9px 205.1px,380.3px 209.6px,385.7px 214.0px,391.1px 218.5px,396.5px 222.9px,401.8px 227.2px,407.1px 231.6px,412.3px 235.9px,417.5px 240.1px,422.6px 244.4px,427.7px 248.5px,432.7px 252.7px,437.7px 256.7px,442.6px 260.8px,447.4px 264.7px,452.2px 268.6px,456.9px 272.4px,461.5px 276.2px,466.0px 279.9px,470.4px 283.6px,474.7px 287.1px,478.9px 290.6px,482.9px 293.9px,486.9px 297.1px,490.7px 300.3px,494.4px 303.3px,498.0px 306.3px,501.6px 309.2px,505.1px 312.1px,508.4px 314.9px,511.7px 317.6px,514.9px 320.1px,517.9px 322.6px,520.8px 325.0px,523.6px 327.2px,526.3px 329.4px,528.8px 331.5px,531.3px 333.6px,533.7px 335.5px,536.0px 337.4px,538.1px 339.2px,540.2px 340.9px,542.2px 342.5px,544.1px 344.1px,545.9px 345.6px,547.6px 347.0px,549.3px 348.4px,550.8px 349.7px,552.3px 350.9px,553.8px 352.1px,555.2px 353.2px,556.5px 354.3px,557.8px 355.3px,559.0px 356.3px,560.1px 357.2px,561.2px 358.2px,562.3px 359.0px,563.3px 359.9px,564.3px 360.7px,565.3px 361.5px,566.2px 362.3px,567.1px 363.0px,568.0px 363.7px,568.8px 364.4px,569.6px 365.1px,570.4px 365.7px,571.1px 366.3px,571.8px 366.9px,572.5px 367.4px,573.1px 367.9px,573.7px 368.4px,574.3px 368.9px,574.8px 369.3px,575.3px 369.7px,575.8px 370.1px,576.2px 370.5px,576.7px 370.8px,577.1px 371.2px,577.5px 371.5px,577.8px 371.8px,578.2px 372.1px,578.5px 372.3px,578.8px 372.6px,579.1px 372.8px,579.3px 373.0px,579.6px 373.2px,579.8px 373.4px,580.1px 373.7px,580.5px 374.0px,580.8px 374.3px,581.1px 374.5px,581.4px 374.8px,581.7px 375.0px,581.9px 375.2px,582.1px 375.3px,582.3px 375.5px,582.5px 375.7px,582.8px 375.9px,583.0px 376.1px,583.2px 376.3px,583.4px 376.4px,583.6px 376.5px);"><i style="top:2px;left:51px;width:29px;height:3px;background:linear-gradient(90deg,#006600 0px,#006900 29px)"></i><i style="top:5px;left:42px;width:48px;height:3px;background:linear-gradient(90deg,#006600 0px,#006b00 48px)"></i><i style="top:8px;left:36px;width:64px;height:3px;background:linear-gradient(90deg,#006600 0px,#006c00 64px)"></i><i style="top:11px;left:32px;width:76px;height:3px;background:linear-gradient(90deg,#006600 0px,#006e00 76px)"></i><i style="top:14px;left:29px;width:86px;height:3px;background:linear-gradient(90deg,#006700 0px,#006f00 86px)"></i><i style="top:17px;left:27px;width:94px;height:3px;background:linear-gradient(90deg,#006700 0px,#007100 94px)"></i><i style="top:20px;left:25px;width:102px;height:3px;background:linear-gradient(90deg,#006801 0px,#007200 102px)"></i><i style="top:23px;left:23px;width:111px;height:3px;background:linear-gradient(90deg,#006801 0px,#007300 111px)"></i><i style="top:26px;left:20px;width:120px;height:3px;background:linear-gradient(90deg,#006802 0px,#007400 120px)"></i><i style="top:29px;left:19px;width:126px;height:3px;background:linear-gradient(90deg,#006902 0px,#007600 126px)"></i><i style="top:32px;left:17px;width:133px;height:3px;background:linear-gradient(90deg,#006a03 0px,#007700 133px)"></i><i style="top:35px;left:16px;width:140px;height:3px;background:linear-gradient(90deg,#006a03 0px,#007800 140px)"></i><i style="top:38px;left:14px;width:148px;height:3px;background:linear-gradient(90deg,#006b04 0px,#007900 148px)"></i><i style="top:41px;left:13px;width:153px;height:3px;background:linear-gradient(90deg,#006b05 0px,#007a00 139px,#007a00 153px)"></i><i style="top:44px;left:12px;width:159px;height:3px;background:linear-gradient(90deg,#006c05 0px,#007a00 130px,#007b00 159px)"></i><i style="top:47px;left:11px;width:165px;height:3px;background:linear-gradient(90deg,#006d06 0px,#007a00 126px,#007d00 165px)"></i><i style="top:50px;left:11px;width:169px;height:3px;background:linear-gradient(90deg,#006d06 0px,#007b00 125px,#007e00 169px)"></i><i style="top:53px;left:10px;width:175px;height:3px;background:linear-gradient(90deg,#006e07 0px,#007c00 125px,#007f00 175px)"></i><i style="top:56px;left:9px;width:180px;height:3px;background:linear-gradient(90deg,#006e08 0px,#007d00 127px,#008000 180px)"></i><i style="top:59px;left:8px;width:186px;height:3px;background:linear-gradient(90deg,#006f08 0px,#007e00 130px,#008100 186px)"></i><i style="top:62px;left:7px;width:192px;height:3px;background:linear-gradient(90deg,#007009 0px,#007f00 133px,#008200 192px)"></i><i style="top:65px;left:6px;width:197px;height:3px;background:linear-gradient(90deg,#00700a 0px,#008000 137px,#008300 197px)"></i><i style="top:68px;left:6px;width:202px;height:3px;background:linear-gradient(90deg,#00710a 0px,#008100 139px,#008400 202px)"></i><i style="top:71px;left:5px;width:207px;height:3px;background:linear-gradient(90deg,#00710b 0px,#008200 143px,#008500 207px)"></i><i style="top:74px;left:5px;width:211px;height:3px;background:linear-gradient(90deg,#00720b 0px,#008300 147px,#008600 211px)"></i><i style="top:77px;left:4px;width:216px;height:3px;background:linear-gradient(90deg,#00730c 0px,#008400 151px,#008700 216px)"></i><i style="top:80px;left:4px;width:220px;height:3px;background:linear-gradient(90deg,#00730d 0px,#008500 155px,#008800 220px)"></i><i style="top:83px;left:3px;width:225px;height:3px;background:linear-gradient(90deg,#00740e 0px,#008600 159px,#008900 225px)"></i><i style="top:86px;left:3px;width:229px;height:3px;background:linear-gradient(90deg,#00750e 0px,#008700 163px,#008a00 229px)"></i><i style="top:89px;left:2px;width:234px;height:3px;background:linear-gradient(90deg,#00750f 0px,#008800 168px,#008b00 234px)"></i><i style="top:92px;left:2px;width:238px;height:3px;background:linear-gradient(90deg,#007610 0px,#008900 171px,#008c00 238px)"></i><i style="top:95px;left:2px;width:242px;height:3px;background:linear-gradient(90deg,#007610 0px,#008b00 176px,#008d00 242px)"></i><i style="top:98px;left:1px;width:247px;height:3px;background:linear-gradient(90deg,#007711 0px,#008c00 180px,#008e00 247px)"></i><i style="top:101px;left:1px;width:251px;height:3px;background:linear-gradient(90deg,#007812 0px,#008d00 184px,#008e00 251px)"></i><i style="top:104px;left:1px;width:255px;height:3px;background:linear-gradient(90deg,#007813 0px,#008e00 188px,#008f00 255px)"></i><i style="top:107px;left:1px;width:259px;height:3px;background:linear-gradient(90deg,#007913 0px,#008f00 192px,#039000 258px,#049000 259px)"></i><i style="top:110px;left:1px;width:263px;height:3px;background:linear-gradient(90deg,#007a14 0px,#009000 196px,#039100 257px,#089100 263px)"></i><i style="top:113px;left:1px;width:266px;height:3px;background:linear-gradient(90deg,#007a15 0px,#009100 197px,#039200 256px,#0b9200 266px)"></i><i style="top:116px;left:1px;width:270px;height:3px;background:linear-gradient(90deg,#007b16 0px,#009200 197px,#039300 255px,#0f9300 270px)"></i><i style="top:119px;left:1px;width:274px;height:3px;background:linear-gradient(90deg,#007c17 0px,#009300 196px,#039400 254px,#139300 274px)"></i><i style="top:122px;left:1px;width:278px;height:3px;background:linear-gradient(90deg,#007c18 0px,#009300 196px,#039500 252px,#179400 278px)"></i><i style="top:125px;left:1px;width:282px;height:3px;background:linear-gradient(90deg,#007d18 0px,#009400 196px,#039600 251px,#1c9500 282px)"></i><i style="top:128px;left:0px;width:286px;height:3px;background:linear-gradient(90deg,#007d19 0px,#009501 192px,#039600 251px,#209600 286px)"></i><i style="top:131px;left:0px;width:290px;height:3px;background:linear-gradient(90deg,#007e1a 0px,#009602 190px,#039700 250px,#249600 290px)"></i><i style="top:134px;left:0px;width:294px;height:3px;background:linear-gradient(90deg,#007f1b 0px,#009603 189px,#039800 249px,#2a9700 294px)"></i><i style="top:137px;left:0px;width:298px;height:3px;background:linear-gradient(90deg,#007f1c 0px,#009704 187px,#039900 248px,#2f9800 298px)"></i><i style="top:140px;left:0px;width:302px;height:3px;background:linear-gradient(90deg,#00801d 0px,#009806 186px,#029900 246px,#349800 302px)"></i><i style="top:143px;left:0px;width:306px;height:3px;background:linear-gradient(90deg,#00801e 0px,#009907 184px,#019900 244px,#3a9900 306px)"></i><i style="top:146px;left:1px;width:308px;height:3px;background:linear-gradient(90deg,#00811f 0px,#009908 182px,#039900 244px,#3f9900 308px)"></i><i style="top:149px;left:1px;width:312px;height:3px;background:linear-gradient(90deg,#008220 0px,#00990a 178px,#039900 243px,#449900 312px)"></i><i style="top:152px;left:1px;width:316px;height:3px;background:linear-gradient(90deg,#008221 0px,#00990c 171px,#039900 242px,#4a9900 316px)"></i><i style="top:155px;left:1px;width:319px;height:3px;background:linear-gradient(90deg,#008322 0px,#00990f 165px,#039900 241px,#509900 319px)"></i><i style="top:158px;left:1px;width:322px;height:3px;background:linear-gradient(90deg,#008423 0px,#009911 159px,#039900 240px,#559900 322px)"></i><i style="top:161px;left:1px;width:326px;height:3px;background:linear-gradient(90deg,#008424 0px,#009913 153px,#039901 239px,#589900 323px,#5c9900 326px)"></i><i style="top:164px;left:1px;width:330px;height:3px;background:linear-gradient(90deg,#008525 0px,#009915 147px,#039903 238px,#589900 321px,#639900 330px)"></i><i style="top:167px;left:1px;width:334px;height:3px;background:linear-gradient(90deg,#008527 0px,#009918 141px,#039904 237px,#439900 301px,#6a9900 334px)"></i><i style="top:170px;left:1px;width:337px;height:3px;background:linear-gradient(90deg,#008628 0px,#00991a 135px,#029906 235px,#339900 285px,#709900 337px)"></i><i style="top:173px;left:2px;width:340px;height:3px;background:linear-gradient(90deg,#008729 0px,#00991c 129px,#029907 233px,#359900 284px,#789900 340px)"></i><i style="top:176px;left:2px;width:344px;height:3px;background:linear-gradient(90deg,#00872a 0px,#00991e 124px,#029909 232px,#399900 286px,#809900 344px)"></i><i style="top:179px;left:3px;width:347px;height:3px;background:linear-gradient(90deg,#00882b 0px,#009920 118px,#02990a 230px,#3e9900 288px,#889900 347px)"></i><i style="top:182px;left:3px;width:351px;height:3px;background:linear-gradient(90deg,#00882c 0px,#009922 113px,#02990c 229px,#439900 291px,#919900 351px)"></i><i style="top:185px;left:3px;width:354px;height:3px;background:linear-gradient(90deg,#00892e 0px,#009924 109px,#02990d 228px,#4a9900 295px,#999900 354px)"></i><i style="top:188px;left:3px;width:358px;height:3px;background:linear-gradient(90deg,#00892f 0px,#009926 105px,#02990f 227px,#509900 299px,#999600 354px,#999000 358px)"></i><i style="top:191px;left:4px;width:360px;height:3px;background:linear-gradient(90deg,#008a30 0px,#009928 100px,#029910 225px,#589900 302px,#999700 350px,#998900 360px)"></i><i style="top:194px;left:4px;width:363px;height:3px;background:linear-gradient(90deg,#008b32 0px,#00992a 96px,#029912 224px,#579900 300px,#999700 348px,#988200 363px)"></i><i style="top:197px;left:4px;width:368px;height:3px;background:linear-gradient(90deg,#008b33 0px,#00992c 93px,#039913 223px,#579900 298px,#999600 346px,#967800 368px)"></i><i style="top:200px;left:4px;width:371px;height:3px;background:linear-gradient(90deg,#008c34 0px,#00992e 89px,#039915 222px,#589901 297px,#999600 344px,#957100 371px)"></i><i style="top:203px;left:5px;width:373px;height:3px;background:linear-gradient(90deg,#008c36 0px,#00992f 85px,#039917 220px,#589903 294px,#999700 340px,#946d00 371px,#946b00 373px)"></i><i style="top:206px;left:5px;width:378px;height:3px;background:linear-gradient(90deg,#008d37 0px,#009931 82px,#039918 219px,#579906 292px,#909900 331px,#999500 339px,#946b00 371px,#916200 378px)"></i><i style="top:209px;left:5px;width:381px;height:3px;background:linear-gradient(90deg,#008d39 0px,#009933 79px,#03991a 218px,#579908 290px,#939900 331px,#999200 339px,#946800 371px,#905d00 381px)"></i><i style="top:212px;left:6px;width:383px;height:3px;background:linear-gradient(90deg,#008e3a 0px,#009935 75px,#03991c 216px,#58990a 288px,#999800 332px,#956800 368px,#8f5800 383px)"></i><i style="top:215px;left:6px;width:388px;height:3px;background:linear-gradient(90deg,#008e3c 0px,#009937 72px,#03991e 215px,#58990c 286px,#999600 331px,#956600 368px,#8d5100 388px)"></i><i style="top:218px;left:6px;width:392px;height:3px;background:linear-gradient(90deg,#008f3d 0px,#009939 70px,#039920 214px,#57990e 284px,#999700 328px,#956400 368px,#8b4b00 392px)"></i><i style="top:221px;left:7px;width:394px;height:3px;background:linear-gradient(90deg,#00903f 0px,#00993b 67px,#039922 212px,#589910 282px,#999702 325px,#956100 367px,#8a4700 394px)"></i><i style="top:224px;left:7px;width:397px;height:3px;background:linear-gradient(90deg,#009041 0px,#00993d 65px,#039924 211px,#589912 280px,#999704 323px,#996a00 358px,#884300 397px)"></i><i style="top:227px;left:8px;width:400px;height:3px;background:linear-gradient(90deg,#009142 0px,#00993f 62px,#039926 209px,#589915 277px,#999607 320px,#996b00 353px,#873f00 400px)"></i><i style="top:230px;left:8px;width:404px;height:3px;background:linear-gradient(90deg,#009144 0px,#009941 60px,#039928 208px,#579917 275px,#99980a 317px,#996b00 351px,#873d00 400px,#853a00 404px)"></i><i style="top:233px;left:8px;width:408px;height:3px;background:linear-gradient(90deg,#009146 0px,#009942 59px,#03992a 207px,#599919 274px,#99970c 315px,#996b00 348px,#8c4500 387px,#833600 408px)"></i><i style="top:236px;left:9px;width:410px;height:3px;background:linear-gradient(90deg,#009247 0px,#009944 57px,#03992c 205px,#58991c 271px,#99970f 312px,#996a02 345px,#914c00 376px,#823300 410px)"></i><i style="top:239px;left:9px;width:413px;height:3px;background:linear-gradient(90deg,#009249 0px,#009946 56px,#02992e 203px,#56991f 268px,#999611 310px,#996a04 343px,#924d00 372px,#813000 413px)"></i><i style="top:242px;left:10px;width:416px;height:3px;background:linear-gradient(90deg,#00934b 0px,#009948 55px,#029930 201px,#579921 266px,#999614 307px,#996906 340px,#944e00 368px,#7f2d00 416px)"></i><i style="top:245px;left:10px;width:420px;height:3px;background:linear-gradient(90deg,#00934d 0px,#00994a 55px,#029933 200px,#579924 264px,#999717 304px,#996b08 336px,#944e00 366px,#7d2900 420px)"></i><i style="top:248px;left:11px;width:423px;height:3px;background:linear-gradient(90deg,#00944f 0px,#00994b 56px,#029935 198px,#579926 261px,#99971a 301px,#996a0b 333px,#944c01 365px,#7d2800 420px,#7c2600 423px)"></i><i style="top:251px;left:11px;width:426px;height:3px;background:linear-gradient(90deg,#009451 0px,#00994d 58px,#029937 197px,#569929 259px,#99971d 299px,#996b0d 330px,#954b02 364px,#7d2700 419px,#7a2400 426px)"></i><i style="top:254px;left:12px;width:429px;height:3px;background:linear-gradient(90deg,#009553 0px,#00994e 69px,#02993a 195px,#58992c 257px,#999620 296px,#996a0f 327px,#954903 363px,#7d2500 419px,#792100 429px)"></i><i style="top:257px;left:12px;width:433px;height:3px;background:linear-gradient(90deg,#009555 0px,#00994e 81px,#02993c 194px,#57992f 255px,#999623 294px,#996911 325px,#954804 362px,#7d2500 418px,#771f00 433px)"></i><i style="top:260px;left:13px;width:436px;height:3px;background:linear-gradient(90deg,#009657 0px,#009940 184px,#05993f 194px,#5a9931 254px,#999727 290px,#996b14 320px,#954605 361px,#7f2500 413px,#751c00 436px)"></i><i style="top:263px;left:13px;width:439px;height:3px;background:linear-gradient(90deg,#009659 0px,#009942 187px,#36993a 229px,#8d992d 281px,#999529 289px,#996916 319px,#954407 361px,#7f2500 412px,#741a00 439px)"></i><i style="top:266px;left:13px;width:443px;height:3px;background:linear-gradient(90deg,#00965b 0px,#029944 190px,#589938 249px,#99972d 286px,#996b19 315px,#954208 361px,#7e2200 415px,#721800 443px)"></i><i style="top:269px;left:14px;width:445px;height:3px;background:linear-gradient(90deg,#00975e 0px,#029947 188px,#57993b 246px,#999630 283px,#996a1c 312px,#954009 360px,#7d2000 417px,#711600 445px)"></i><i style="top:272px;left:15px;width:448px;height:3px;background:linear-gradient(90deg,#009760 0px,#02994a 186px,#57993e 243px,#999835 279px,#996c1f 307px,#98430c 353px,#7f2100 411px,#6f1400 448px)"></i><i style="top:275px;left:15px;width:452px;height:3px;background:linear-gradient(90deg,#009862 0px,#02994d 185px,#569942 241px,#999738 277px,#996b22 305px,#99440e 348px,#812100 407px,#6e1300 452px)"></i><i style="top:278px;left:16px;width:454px;height:3px;background:linear-gradient(90deg,#009865 0px,#029950 183px,#589945 239px,#99973c 274px,#996a24 302px,#994410 345px,#812000 406px,#6c1100 454px)"></i><i style="top:281px;left:16px;width:458px;height:3px;background:linear-gradient(90deg,#009867 0px,#039953 182px,#579948 237px,#99963f 272px,#996a27 300px,#994312 343px,#811f01 405px,#6b0f00 458px)"></i><i style="top:284px;left:17px;width:460px;height:3px;background:linear-gradient(90deg,#00996a 0px,#039956 180px,#57994c 234px,#999643 269px,#996a2a 296px,#994314 338px,#8f2e09 371px,#721300 439px,#690e00 460px)"></i><i style="top:287px;left:17px;width:464px;height:3px;background:linear-gradient(90deg,#00996c 0px,#039959 179px,#589950 233px,#999848 266px,#996b2d 293px,#994417 334px,#93310d 362px,#761400 431px,#670c00 464px)"></i><i style="top:290px;left:18px;width:467px;height:3px;background:linear-gradient(90deg,#00996e 0px,#03995c 177px,#589954 230px,#99974c 263px,#996b31 289px,#99451a 329px,#94310e 359px,#761400 428px,#650b00 467px)"></i><i style="top:293px;left:18px;width:470px;height:3px;background:linear-gradient(90deg,#009971 0px,#039960 176px,#579957 228px,#999750 261px,#996a34 287px,#99441c 327px,#943010 358px,#761300 428px,#640a00 470px)"></i><i style="top:296px;left:19px;width:473px;height:3px;background:linear-gradient(90deg,#009973 0px,#039963 174px,#57995c 225px,#999654 258px,#996a37 284px,#99431e 324px,#952f11 356px,#771201 426px,#610800 473px)"></i><i style="top:299px;left:20px;width:476px;height:3px;background:linear-gradient(90deg,#009976 0px,#039967 172px,#589960 223px,#999859 254px,#996c3b 279px,#994421 318px,#952e12 354px,#771101 425px,#5f0700 476px)"></i><i style="top:302px;left:21px;width:479px;height:3px;background:linear-gradient(90deg,#009978 0px,#03996b 170px,#589964 220px,#99975e 251px,#996b3e 276px,#994424 314px,#952c13 353px,#761002 425px,#5d0600 479px)"></i><i style="top:305px;left:21px;width:482px;height:3px;background:linear-gradient(90deg,#00997b 0px,#03996e 169px,#579968 218px,#999762 249px,#996a42 274px,#994326 312px,#952a14 353px,#760f02 426px,#5b0500 482px)"></i><i style="top:308px;left:22px;width:485px;height:3px;background:linear-gradient(90deg,#00997e 0px,#039972 167px,#57996d 215px,#999667 246px,#996b46 270px,#994429 307px,#952915 352px,#750e03 427px,#590400 485px)"></i><i style="top:311px;left:23px;width:488px;height:3px;background:linear-gradient(90deg,#009981 0px,#029976 164px,#569971 212px,#99966b 243px,#996a49 267px,#99432b 304px,#952716 351px,#750d03 427px,#570300 488px)"></i><i style="top:314px;left:23px;width:491px;height:3px;background:linear-gradient(90deg,#009984 0px,#02997b 163px,#569976 210px,#999872 240px,#996c4f 263px,#99452f 299px,#962617 350px,#750c04 426px,#550200 491px)"></i><i style="top:317px;left:24px;width:493px;height:3px;background:linear-gradient(90deg,#009987 0px,#02997f 161px,#55997b 207px,#999777 237px,#996b52 260px,#994532 295px,#962418 349px,#740b04 427px,#540200 493px)"></i><i style="top:320px;left:25px;width:496px;height:3px;background:linear-gradient(90deg,#00998a 0px,#029983 159px,#579980 205px,#99977c 234px,#996a56 257px,#994435 292px,#962318 348px,#740a04 427px,#520100 496px)"></i><i style="top:323px;left:25px;width:500px;height:3px;background:linear-gradient(90deg,#00998d 0px,#029988 158px,#569985 203px,#999681 232px,#996959 255px,#994337 290px,#962119 348px,#730904 429px,#4f0000 500px)"></i><i style="top:326px;left:26px;width:503px;height:3px;background:linear-gradient(90deg,#009990 0px,#02998d 156px,#56998b 200px,#999889 228px,#996c60 250px,#99443c 284px,#98231d 341px,#770a06 419px,#4e0000 503px)"></i><i style="top:329px;left:26px;width:506px;height:3px;background:linear-gradient(90deg,#009993 0px,#029991 155px,#559991 198px,#99988f 226px,#996c65 247px,#994540 280px,#992420 334px,#790a08 413px,#4e0000 506px)"></i><i style="top:332px;left:27px;width:509px;height:3px;background:linear-gradient(90deg,#009997 0px,#029996 153px,#579996 196px,#999794 223px,#996b69 244px,#994443 277px,#992322 331px,#790909 412px,#4e0000 508px,#4e0000 509px)"></i><i style="top:335px;left:28px;width:511px;height:3px;background:linear-gradient(90deg,#009799 0px,#029599 151px,#579499 194px,#999498 221px,#99696c 242px,#994244 275px,#992223 329px,#850e0f 384px,#540000 488px,#4d0000 511px)"></i><i style="top:338px;left:29px;width:515px;height:3px;background:linear-gradient(90deg,#009299 0px,#028e99 149px,#578c99 193px,#978a99 219px,#998e98 220px,#99636b 242px,#993f45 275px,#991f23 330px,#790709 411px,#4e0000 506px,#4c0000 515px)"></i><i style="top:341px;left:29px;width:518px;height:3px;background:linear-gradient(90deg,#008d99 0px,#028799 148px,#568499 192px,#978199 219px,#998899 220px,#995f6c 242px,#993b45 276px,#991d23 332px,#78060a 413px,#4e0000 506px,#4c0000 518px)"></i><i style="top:344px;left:30px;width:520px;height:3px;background:linear-gradient(90deg,#008899 0px,#028099 146px,#567c99 191px,#997999 219px,#998196 220px,#99596a 243px,#993743 278px,#981922 337px,#760409 418px,#4e0000 505px,#4c0000 520px)"></i><i style="top:347px;left:31px;width:524px;height:3px;background:linear-gradient(90deg,#008399 0px,#027999 144px,#577599 190px,#997199 218px,#997b97 219px,#99556a 242px,#993444 277px,#981722 337px,#750309 418px,#4e0000 504px,#4b0000 524px)"></i><i style="top:350px;left:32px;width:526px;height:3px;background:linear-gradient(90deg,#007e99 0px,#027399 142px,#586e99 189px,#986a99 217px,#997697 218px,#99516b 241px,#993245 276px,#981623 336px,#75020a 417px,#4e0000 503px,#4a0000 526px)"></i><i style="top:353px;left:33px;width:528px;height:3px;background:linear-gradient(90deg,#007a99 0px,#026e99 140px,#566799 187px,#986399 216px,#997198 217px,#994e6c 240px,#992f45 276px,#961322 339px,#720109 423px,#4e0000 502px,#4a0000 528px)"></i><i style="top:356px;left:33px;width:533px;height:3px;background:linear-gradient(90deg,#007599 0px,#026899 139px,#576199 187px,#975c99 216px,#996c98 217px,#99496b 241px,#992b44 278px,#961122 340px,#720009 424px,#4d0001 502px,#490000 533px)"></i><i style="top:359px;left:34px;width:535px;height:3px;background:linear-gradient(90deg,#007199 0px,#026399 137px,#575b99 186px,#975699 215px,#996799 216px,#99466c 240px,#992945 277px,#960f23 339px,#72000a 423px,#4d0001 501px,#490000 535px)"></i><i style="top:362px;left:35px;width:538px;height:3px;background:linear-gradient(90deg,#006d99 0px,#025e99 135px,#565699 184px,#994f99 215px,#996197 216px,#99416a 241px,#992544 279px,#960e23 338px,#72000a 422px,#4d0001 500px,#480000 538px)"></i><i style="top:365px;left:36px;width:541px;height:3px;background:linear-gradient(90deg,#006999 0px,#025999 133px,#565099 183px,#994a99 214px,#995d97 215px,#993e6b 240px,#992344 278px,#960d24 337px,#73000b 418px,#4d0001 499px,#480000 541px)"></i><i style="top:368px;left:36px;width:544px;height:3px;background:linear-gradient(90deg,#006599 0px,#025499 132px,#574b99 183px,#984499 214px,#995898 215px,#993b6b 240px,#992044 279px,#960b25 337px,#75000c 414px,#4d0002 499px,#470000 544px)"></i><i style="top:371px;left:37px;width:547px;height:3px;background:linear-gradient(90deg,#006199 0px,#025099 130px,#574699 182px,#983f99 213px,#995498 214px,#99376b 240px,#991d44 280px,#960a26 336px,#76000e 409px,#4d0002 498px,#470000 547px)"></i><i style="top:374px;left:38px;width:548px;height:3px;background:linear-gradient(90deg,#005d99 0px,#024c99 128px,#564299 180px,#973a99 212px,#995098 213px,#99346c 239px,#991b45 279px,#960926 335px,#79000f 403px,#4d0002 497px,#460000 548px)"></i><i style="top:377px;left:39px;width:547px;height:3px;background:linear-gradient(90deg,#005999 0px,#024899 126px,#573d99 179px,#973699 211px,#994c99 212px,#99316c 238px,#991945 278px,#960727 334px,#7a0011 398px,#4d0002 496px,#460000 547px)"></i><i style="top:380px;left:40px;width:538px;height:3px;background:linear-gradient(90deg,#005699 0px,#034499 125px,#593999 179px,#993199 211px,#994797 212px,#992d6a 239px,#991644 280px,#960628 333px,#7b0012 395px,#4d0003 495px,#470000 538px)"></i><i style="top:383px;left:41px;width:529px;height:3px;background:linear-gradient(90deg,#005299 0px,#034099 123px,#573599 177px,#992d99 210px,#994397 211px,#992a6b 238px,#991444 280px,#960528 332px,#790011 400px,#4d0003 494px,#480001 529px)"></i><i style="top:386px;left:42px;width:521px;height:3px;background:linear-gradient(90deg,#004f99 0px,#033d99 121px,#583199 176px,#982999 209px,#993f98 210px,#99276c 237px,#991245 279px,#960329 331px,#73000e 413px,#4d0003 493px,#490001 521px)"></i><i style="top:389px;left:43px;width:512px;height:3px;background:linear-gradient(90deg,#004c99 0px,#033999 119px,#582e99 175px,#982699 208px,#993b98 209px,#99246b 237px,#991044 280px,#96022a 330px,#73000e 412px,#4d0003 491px,#4a0002 512px)"></i><i style="top:392px;left:43px;width:504px;height:3px;background:linear-gradient(90deg,#004899 0px,#033699 118px,#592a99 175px,#972299 208px,#993898 209px,#99216c 237px,#990e45 280px,#96012a 330px,#73000f 412px,#4d0004 491px,#4b0003 504px)"></i><i style="top:395px;left:44px;width:495px;height:3px;background:linear-gradient(90deg,#004599 0px,#033399 116px,#582799 173px,#971f99 207px,#993499 208px,#991f6c 236px,#990c46 279px,#96002b 329px,#73000f 411px,#4d0004 490px,#4c0003 495px)"></i><i style="top:398px;left:45px;width:486px;height:3px;background:linear-gradient(90deg,#004299 0px,#033099 114px,#582499 172px,#991c99 207px,#993097 208px,#991b6b 237px,#990944 282px,#95002b 329px,#720010 411px,#4d0004 486px)"></i><i style="top:401px;left:46px;width:478px;height:3px;background:linear-gradient(90deg,#003f99 0px,#032d99 112px,#582199 171px,#991999 206px,#992d97 207px,#99196b 236px,#990744 281px,#95002c 328px,#720010 410px,#4e0005 478px)"></i><i style="top:404px;left:47px;width:469px;height:3px;background:linear-gradient(90deg,#003c99 0px,#032b99 110px,#571e99 169px,#981699 205px,#992998 206px,#99166b 236px,#990544 282px,#95002c 327px,#720010 409px,#520006 469px)"></i><i style="top:407px;left:48px;width:460px;height:3px;background:linear-gradient(90deg,#003a99 0px,#032899 108px,#581c99 168px,#981399 204px,#992698 205px,#99146b 235px,#990444 281px,#95002d 326px,#720011 408px,#570007 460px)"></i><i style="top:410px;left:49px;width:451px;height:3px;background:linear-gradient(90deg,#003799 0px,#032699 106px,#581999 167px,#981199 203px,#992399 204px,#99126c 234px,#990245 280px,#95002e 325px,#720011 407px,#5b0009 451px)"></i><i style="top:413px;left:50px;width:442px;height:3px;background:linear-gradient(90deg,#003499 0px,#032399 104px,#591799 166px,#990f99 203px,#991f97 204px,#990e6a 235px,#990043 283px,#95002e 324px,#720012 406px,#5f000a 442px)"></i><i style="top:416px;left:51px;width:434px;height:3px;background:linear-gradient(90deg,#003299 0px,#032199 102px,#571599 164px,#990d99 202px,#991c97 203px,#990c6b 234px,#990044 282px,#95002f 323px,#720012 405px,#63000c 434px)"></i><i style="top:419px;left:52px;width:425px;height:3px;background:linear-gradient(90deg,#002f99 0px,#031f99 100px,#581399 163px,#990b99 201px,#991a98 202px,#990a6c 233px,#990045 280px,#95002f 322px,#720012 404px,#67000e 425px)"></i><i style="top:422px;left:53px;width:416px;height:3px;background:linear-gradient(90deg,#002d99 0px,#031d99 98px,#581199 162px,#980999 200px,#991798 201px,#99086b 233px,#990048 275px,#950030 321px,#720013 403px,#6b0010 416px)"></i><i style="top:425px;left:54px;width:407px;height:3px;background:linear-gradient(90deg,#002a99 0px,#031b99 96px,#590f99 161px,#980799 199px,#991498 200px,#99066c 232px,#99004a 272px,#950031 320px,#720013 402px,#700012 407px)"></i><i style="top:428px;left:55px;width:398px;height:3px;background:linear-gradient(90deg,#002899 0px,#031999 94px,#580d99 159px,#980699 198px,#991199 199px,#99046c 231px,#990045 280px,#950031 319px,#730014 398px)"></i><i style="top:431px;left:56px;width:389px;height:3px;background:linear-gradient(90deg,#002699 0px,#031799 92px,#580b99 158px,#990499 198px,#990e97 199px,#99016b 232px,#990044 283px,#950031 319px,#770017 389px)"></i><i style="top:434px;left:57px;width:381px;height:3px;background:linear-gradient(90deg,#002499 0px,#031699 90px,#580a99 157px,#990399 197px,#990b97 198px,#99006b 231px,#990044 282px,#950032 318px,#7a0019 381px)"></i><i style="top:437px;left:58px;width:372px;height:3px;background:linear-gradient(90deg,#002299 0px,#031499 88px,#570999 155px,#980299 196px,#990998 197px,#99006b 231px,#990044 283px,#950032 317px,#7d001c 372px)"></i><i style="top:440px;left:59px;width:363px;height:3px;background:linear-gradient(90deg,#002099 0px,#031299 86px,#580799 154px,#980199 195px,#990696 197px,#99006b 230px,#990044 282px,#950033 316px,#81001f 363px)"></i><i style="top:443px;left:61px;width:353px;height:3px;background:linear-gradient(90deg,#001e99 0px,#031199 83px,#580699 152px,#980199 193px,#990290 199px,#990064 236px,#99003e 293px,#91002e 324px,#840022 353px)"></i><i style="top:446px;left:62px;width:344px;height:3px;background:linear-gradient(90deg,#001c99 0px,#030f99 81px,#580599 151px,#990197 194px,#99006a 229px,#990043 283px,#940034 314px,#880026 344px)"></i><i style="top:449px;left:64px;width:335px;height:3px;background:linear-gradient(90deg,#001a99 0px,#030e99 78px,#570499 148px,#990097 192px,#99006b 227px,#990044 281px,#940034 312px,#8b0029 335px)"></i><i style="top:452px;left:65px;width:326px;height:3px;background:linear-gradient(90deg,#001899 0px,#030d99 76px,#580399 147px,#990096 192px,#990069 228px,#990043 283px,#940034 312px,#8e002d 326px)"></i><i style="top:455px;left:67px;width:316px;height:3px;background:linear-gradient(90deg,#001699 0px,#030c99 73px,#580299 145px,#990096 190px,#99006a 226px,#990043 282px,#940034 311px,#910032 316px)"></i><i style="top:458px;left:68px;width:307px;height:3px;background:linear-gradient(90deg,#001599 0px,#030b99 71px,#580199 144px,#990097 189px,#99006b 225px,#990044 281px,#950036 307px)"></i><i style="top:461px;left:69px;width:298px;height:3px;background:linear-gradient(90deg,#001399 0px,#030999 69px,#570199 142px,#990097 188px,#99006a 225px,#990043 282px,#98003b 298px)"></i><i style="top:464px;left:70px;width:290px;height:3px;background:linear-gradient(90deg,#001299 0px,#030899 67px,#580099 141px,#990097 187px,#99006b 224px,#990044 281px,#99003f 290px)"></i><i style="top:467px;left:71px;width:281px;height:3px;background:linear-gradient(90deg,#001099 0px,#030899 65px,#580099 140px,#990096 187px,#990069 225px,#990044 281px)"></i><i style="top:470px;left:73px;width:271px;height:3px;background:linear-gradient(90deg,#000e98 0px,#020799 62px,#570099 137px,#990096 185px,#99006a 223px,#990048 271px)"></i><i style="top:473px;left:74px;width:262px;height:3px;background:linear-gradient(90deg,#000d98 0px,#020699 60px,#580099 136px,#990096 184px,#99006a 222px,#99004d 262px)"></i><i style="top:476px;left:76px;width:252px;height:3px;background:linear-gradient(90deg,#000c98 0px,#020599 57px,#580099 134px,#990097 182px,#99006a 221px,#990053 252px)"></i><i style="top:479px;left:77px;width:244px;height:3px;background:linear-gradient(90deg,#000a97 0px,#020499 55px,#580099 133px,#990097 181px,#99006a 220px,#990058 244px)"></i><i style="top:482px;left:79px;width:234px;height:3px;background:linear-gradient(90deg,#000997 0px,#020499 52px,#570099 130px,#990097 179px,#99006b 218px,#99005e 234px)"></i><i style="top:485px;left:80px;width:225px;height:3px;background:linear-gradient(90deg,#000896 0px,#020399 50px,#580099 129px,#990096 179px,#99006a 219px,#990065 225px)"></i><i style="top:488px;left:82px;width:215px;height:3px;background:linear-gradient(90deg,#000796 0px,#020299 47px,#580099 127px,#990096 177px,#99006c 215px)"></i><i style="top:491px;left:83px;width:206px;height:3px;background:linear-gradient(90deg,#000695 0px,#020299 45px,#580099 126px,#990097 176px,#990073 206px)"></i><i style="top:494px;left:85px;width:197px;height:3px;background:linear-gradient(90deg,#000595 0px,#030199 43px,#590099 124px,#990097 174px,#99007b 197px)"></i><i style="top:497px;left:86px;width:188px;height:3px;background:linear-gradient(90deg,#000495 0px,#030199 41px,#590099 123px,#990097 173px,#990084 188px)"></i><i style="top:500px;left:88px;width:178px;height:3px;background:linear-gradient(90deg,#000394 0px,#030199 38px,#590099 121px,#990096 172px,#99008e 178px)"></i><i style="top:503px;left:89px;width:169px;height:3px;background:linear-gradient(90deg,#000394 0px,#030099 36px,#580099 119px,#990099 169px)"></i><i style="top:506px;left:92px;width:158px;height:3px;background:linear-gradient(90deg,#000293 0px,#030098 32px,#590099 116px,#8e0099 158px)"></i><i style="top:509px;left:94px;width:148px;height:3px;background:linear-gradient(90deg,#000193 0px,#030097 29px,#590099 114px,#830099 148px)"></i><i style="top:512px;left:95px;width:140px;height:3px;background:linear-gradient(90deg,#000192 0px,#030096 27px,#590099 113px,#7a0099 140px)"></i><i style="top:515px;left:97px;width:130px;height:3px;background:linear-gradient(90deg,#000092 0px,#030095 24px,#5a0099 111px,#700099 130px)"></i><i style="top:518px;left:100px;width:119px;height:3px;background:linear-gradient(90deg,#000092 0px,#040094 21px,#590099 107px,#670099 119px)"></i><i style="top:521px;left:102px;width:109px;height:3px;background:linear-gradient(90deg,#000091 0px,#040093 18px,#560099 102px,#5d0099 109px)"></i><i style="top:524px;left:105px;width:98px;height:3px;background:linear-gradient(90deg,#000091 0px,#050093 15px,#530099 96px,#550099 98px)"></i><i style="top:527px;left:108px;width:88px;height:3px;background:linear-gradient(90deg,#000090 0px,#0c0093 20px,#4d0098 88px)"></i><i style="top:530px;left:111px;width:77px;height:3px;background:linear-gradient(90deg,#000090 0px,#420097 74px,#450097 77px)"></i><i style="top:533px;left:114px;width:66px;height:3px;background:linear-gradient(90deg,#020090 0px,#3d0096 66px)"></i><i style="top:536px;left:117px;width:55px;height:3px;background:linear-gradient(90deg,#05008f 0px,#350094 55px)"></i><i style="top:539px;left:121px;width:43px;height:3px;background:linear-gradient(90deg,#09008f 0px,#2e0093 43px)"></i><i style="top:542px;left:125px;width:32px;height:3px;background:linear-gradient(90deg,#0d008e 0px,#280091 32px)"></i><i style="top:545px;left:129px;width:20px;height:3px;background:linear-gradient(90deg,#10008e 0px,#210090 20px)"></i><i style="top:548px;left:134px;width:7px;height:1px;background:linear-gradient(90deg,#15008e 0px,#1a008f 7px)"></i></div>
<div class="cl" style="clip-path:polygon(508.4px 334.1px,238.3px 157.3px,119.1px 511.0px);"><i style="top:156px;left:235px;width:9px;height:3px;background:linear-gradient(90deg,#00ff01 0px,#07ff00 9px)"></i><i style="top:159px;left:234px;width:15px;height:3px;background:linear-gradient(90deg,#00ff03 0px,#0cff00 13px,#0fff00 15px)"></i><i style="top:162px;left:233px;width:20px;height:3px;background:linear-gradient(90deg,#00ff05 0px,#0dff01 13px,#16ff00 20px)"></i><i style="top:165px;left:232px;width:26px;height:3px;background:linear-gradient(90deg,#00ff07 0px,#0dff02 13px,#1fff00 26px)"></i><i style="top:168px;left:231px;width:31px;height:3px;background:linear-gradient(90deg,#00ff09 0px,#0bff05 12px,#27ff00 31px)"></i><i style="top:171px;left:230px;width:37px;height:3px;background:linear-gradient(90deg,#00ff0b 0px,#0cff07 12px,#31ff00 37px)"></i><i style="top:174px;left:229px;width:43px;height:3px;background:linear-gradient(90deg,#00ff0d 0px,#0cff09 12px,#3cff00 43px)"></i><i style="top:177px;left:228px;width:48px;height:3px;background:linear-gradient(90deg,#00ff0f 0px,#0cff0b 12px,#45ff00 48px)"></i><i style="top:180px;left:227px;width:54px;height:3px;background:linear-gradient(90deg,#00ff11 0px,#0cff0d 12px,#51ff00 54px)"></i><i style="top:183px;left:226px;width:59px;height:3px;background:linear-gradient(90deg,#00ff14 0px,#0bff10 11px,#5bff00 59px)"></i><i style="top:186px;left:225px;width:65px;height:3px;background:linear-gradient(90deg,#00ff16 0px,#0bff12 11px,#62ff00 62px,#67ff00 65px)"></i><i style="top:189px;left:224px;width:70px;height:3px;background:linear-gradient(90deg,#00ff18 0px,#0bff15 11px,#63ff01 62px,#72ff00 70px)"></i><i style="top:192px;left:223px;width:76px;height:3px;background:linear-gradient(90deg,#00ff1b 0px,#0bff17 11px,#62ff04 61px,#80ff00 76px)"></i><i style="top:195px;left:222px;width:82px;height:3px;background:linear-gradient(90deg,#00ff1d 0px,#0aff1a 10px,#61ff06 60px,#8fff00 82px)"></i><i style="top:198px;left:221px;width:87px;height:3px;background:linear-gradient(90deg,#00ff20 0px,#0aff1c 10px,#60ff09 59px,#9cff00 87px)"></i><i style="top:201px;left:220px;width:93px;height:3px;background:linear-gradient(90deg,#00ff23 0px,#0aff1f 10px,#61ff0c 59px,#acff00 93px)"></i><i style="top:204px;left:219px;width:98px;height:3px;background:linear-gradient(90deg,#00ff25 0px,#0aff22 10px,#60ff0f 58px,#baff00 98px)"></i><i style="top:207px;left:218px;width:104px;height:3px;background:linear-gradient(90deg,#00ff28 0px,#09ff25 9px,#5fff12 57px,#c9ff00 103px,#ccff00 104px)"></i><i style="top:210px;left:217px;width:109px;height:3px;background:linear-gradient(90deg,#00ff2b 0px,#09ff28 9px,#5eff15 56px,#c6ff01 101px,#dbff00 109px)"></i><i style="top:213px;left:216px;width:115px;height:3px;background:linear-gradient(90deg,#00ff2e 0px,#09ff2b 9px,#5fff18 56px,#c9ff04 101px,#efff00 115px)"></i><i style="top:216px;left:215px;width:121px;height:3px;background:linear-gradient(90deg,#00ff31 0px,#09ff2e 9px,#5eff1c 55px,#c6ff08 99px,#fffd00 120px,#fffa00 121px)"></i><i style="top:219px;left:214px;width:126px;height:3px;background:linear-gradient(90deg,#00ff34 0px,#07ff31 8px,#5eff1f 54px,#c6ff0b 98px,#fffd01 119px,#ffea00 126px)"></i><i style="top:222px;left:213px;width:132px;height:3px;background:linear-gradient(90deg,#00ff37 0px,#08ff34 8px,#5dff23 53px,#c6ff0f 97px,#fffc04 118px,#ffd800 132px)"></i><i style="top:225px;left:212px;width:137px;height:3px;background:linear-gradient(90deg,#00ff3a 0px,#08ff37 8px,#5eff26 53px,#c6ff12 96px,#ffff08 116px,#ffca00 137px)"></i><i style="top:228px;left:211px;width:143px;height:3px;background:linear-gradient(90deg,#00ff3e 0px,#08ff3b 8px,#5dff2a 52px,#c6ff16 95px,#fffe0c 115px,#ffc200 139px,#ffbb00 143px)"></i><i style="top:231px;left:210px;width:148px;height:3px;background:linear-gradient(90deg,#00ff41 0px,#08ff3e 8px,#5eff2d 52px,#c6ff1a 94px,#fffd10 114px,#ffc403 137px,#ffaf00 148px)"></i><i style="top:234px;left:209px;width:154px;height:3px;background:linear-gradient(90deg,#00ff44 0px,#08ff42 8px,#5dff31 51px,#c6ff1e 93px,#fffd14 113px,#ffc305 136px,#ffa200 154px)"></i><i style="top:237px;left:208px;width:160px;height:3px;background:linear-gradient(90deg,#00ff48 0px,#08ff45 8px,#5eff35 51px,#c6ff22 92px,#fffc18 112px,#ffc208 135px,#ff9600 160px)"></i><i style="top:240px;left:207px;width:165px;height:3px;background:linear-gradient(90deg,#00ff4b 0px,#08ff49 8px,#5dff39 50px,#c6ff26 91px,#fffe1d 110px,#ffc30c 133px,#ff8e00 164px,#ff8d00 165px)"></i><i style="top:243px;left:206px;width:171px;height:3px;background:linear-gradient(90deg,#00ff4f 0px,#08ff4c 8px,#5eff3d 50px,#c6ff2b 90px,#fffe21 109px,#ffc410 131px,#ff9002 161px,#ff8300 171px)"></i><i style="top:246px;left:205px;width:176px;height:3px;background:linear-gradient(90deg,#00ff53 0px,#07ff51 7px,#5bff41 48px,#c3ff30 88px,#fffd25 108px,#ffc314 130px,#ff8f04 160px,#ff7a00 176px)"></i><i style="top:249px;left:204px;width:182px;height:3px;background:linear-gradient(90deg,#00ff57 0px,#07ff54 7px,#5cff45 48px,#c6ff34 88px,#fffc2a 107px,#ffc217 129px,#ff8d06 159px,#ff7200 182px)"></i><i style="top:252px;left:203px;width:187px;height:3px;background:linear-gradient(90deg,#00ff5b 0px,#07ff58 7px,#5bff4a 47px,#c3ff39 86px,#ffff30 105px,#ffc31b 127px,#ff8e0a 157px,#ff6a00 187px)"></i><i style="top:255px;left:202px;width:193px;height:3px;background:linear-gradient(90deg,#00ff5f 0px,#07ff5d 7px,#5cff4e 47px,#c6ff3d 86px,#fffe34 104px,#ffc420 125px,#ff8f0d 154px,#ff6300 193px)"></i><i style="top:258px;left:201px;width:199px;height:3px;background:linear-gradient(90deg,#00ff63 0px,#07ff61 7px,#5bff53 46px,#c3ff43 84px,#fffe39 103px,#ffc324 124px,#ff8e10 153px,#ff6000 194px,#ff5b00 199px)"></i><i style="top:261px;left:200px;width:204px;height:3px;background:linear-gradient(90deg,#00ff67 0px,#07ff65 7px,#5cff57 46px,#c6ff48 84px,#fffd3e 102px,#ffc228 123px,#ff8d13 152px,#ff5e02 193px,#ff5500 204px)"></i><i style="top:264px;left:199px;width:210px;height:3px;background:linear-gradient(90deg,#00ff6c 0px,#07ff6a 7px,#5bff5c 45px,#c3ff4d 82px,#fffc44 101px,#ffc12b 122px,#ff8d17 150px,#ff5f04 190px,#fc4e00 210px)"></i><i style="top:267px;left:198px;width:215px;height:3px;background:linear-gradient(90deg,#00ff70 0px,#07ff6e 7px,#5cff61 45px,#c6ff52 82px,#ffff4a 99px,#ffc532 119px,#ff8f1b 147px,#ff6108 186px,#fa4a00 212px,#f84800 215px)"></i><i style="top:270px;left:197px;width:221px;height:3px;background:linear-gradient(90deg,#00ff75 0px,#08ff73 7px,#5eff66 45px,#c6ff58 81px,#fffe50 98px,#ffc436 118px,#ff901f 145px,#ff600a 184px,#fa4a01 210px,#f54100 221px)"></i><i style="top:273px;left:196px;width:227px;height:3px;background:linear-gradient(90deg,#00ff7a 0px,#08ff78 7px,#5dff6c 44px,#c6ff5e 80px,#fffe56 97px,#ffc33a 117px,#ff8e22 144px,#ff5f0d 183px,#fa4904 208px,#f13b00 227px)"></i><i style="top:276px;left:195px;width:232px;height:3px;background:linear-gradient(90deg,#00ff7f 0px,#06ff7d 6px,#59ff71 42px,#c2ff64 78px,#fffd5b 96px,#ffc23f 116px,#ff8d25 143px,#ff5e0f 182px,#fa4906 206px,#ed3600 232px)"></i><i style="top:279px;left:194px;width:238px;height:3px;background:linear-gradient(90deg,#00ff84 0px,#06ff82 6px,#5aff77 42px,#c2ff6a 77px,#fffc61 95px,#ffc344 114px,#ff8f2a 140px,#ff6113 177px,#fb4908 204px,#e93000 238px)"></i><i style="top:282px;left:193px;width:243px;height:3px;background:linear-gradient(90deg,#00ff89 0px,#06ff87 6px,#59ff7d 41px,#c2ff70 76px,#ffff69 93px,#ffc44a 112px,#ff8f2f 138px,#ff6016 175px,#fb470a 203px,#e62c00 243px)"></i><i style="top:285px;left:192px;width:249px;height:3px;background:linear-gradient(90deg,#00ff8e 0px,#06ff8d 6px,#5aff82 41px,#c2ff77 75px,#fffe70 92px,#ffc34f 111px,#ff8e32 137px,#ff5f19 174px,#fb460c 202px,#e22700 249px)"></i><i style="top:288px;left:191px;width:254px;height:3px;background:linear-gradient(90deg,#00ff94 0px,#06ff92 6px,#5cff88 41px,#c6ff7d 75px,#fffe76 91px,#ffc254 110px,#ff8d36 136px,#ff5e1b 173px,#fb450e 201px,#de2300 254px)"></i><i style="top:291px;left:190px;width:260px;height:3px;background:linear-gradient(90deg,#00ff99 0px,#06ff98 6px,#5aff8f 40px,#c2ff84 73px,#fffd7d 90px,#ffc35b 108px,#ff8f3c 133px,#ff5f20 169px,#fb4410 200px,#db2000 258px,#da1f00 260px)"></i><i style="top:294px;left:189px;width:266px;height:3px;background:linear-gradient(90deg,#00ff9f 0px,#06ff9e 6px,#5cff95 40px,#c6ff8b 73px,#fffc83 89px,#ffc260 107px,#ff8d3f 132px,#ff5f23 167px,#fb4313 199px,#da1f01 257px,#d51c00 266px)"></i><i style="top:297px;left:188px;width:271px;height:3px;background:linear-gradient(90deg,#00ffa5 0px,#07ffa4 6px,#5bff9c 39px,#c2ff92 71px,#ffff8d 87px,#ffc467 105px,#ff8f46 129px,#ff6128 163px,#fb4114 199px,#d91e02 257px,#d11800 271px)"></i><i style="top:300px;left:187px;width:277px;height:3px;background:linear-gradient(90deg,#00ffab 0px,#07ffaa 6px,#5cffa2 39px,#c5ff99 71px,#fffe94 86px,#ffc56e 103px,#ff904b 127px,#ff612c 161px,#fc4017 198px,#d91d03 256px,#cd1500 277px)"></i><i style="top:303px;left:186px;width:282px;height:3px;background:linear-gradient(90deg,#00ffb2 0px,#07ffb0 6px,#5bffa9 38px,#c2ffa1 69px,#fffd9c 85px,#ffc474 102px,#ff8e4f 126px,#ff5f2f 160px,#fc3e18 198px,#d81b04 257px,#c91200 282px)"></i><i style="top:306px;left:185px;width:288px;height:3px;background:linear-gradient(90deg,#00ffb8 0px,#07ffb7 6px,#5cffb1 38px,#c5ffa9 69px,#fffda3 84px,#ffc37a 101px,#ff8f55 124px,#ff6034 157px,#fc3c1a 198px,#d71a05 258px,#c40f00 288px)"></i><i style="top:309px;left:184px;width:293px;height:3px;background:linear-gradient(90deg,#00ffbf 0px,#07ffbe 6px,#5bffb8 37px,#c2ffb2 67px,#feffae 82px,#ffc180 100px,#ff8d59 123px,#ff5f37 156px,#fc3a1c 198px,#d61806 258px,#bf0d00 293px)"></i><i style="top:312px;left:183px;width:299px;height:3px;background:linear-gradient(90deg,#00ffc6 0px,#05ffc5 5px,#59ffc0 36px,#c1ffba 66px,#ffffb7 81px,#ffc68a 97px,#ff9162 119px,#ff633e 150px,#fc381e 198px,#d51707 259px,#ba0b00 299px)"></i><i style="top:315px;left:182px;width:305px;height:3px;background:linear-gradient(90deg,#00ffcd 0px,#05ffcc 5px,#58ffc8 35px,#c1ffc3 65px,#fffebf 80px,#ffc491 96px,#ff9067 118px,#ff6142 149px,#fc3620 198px,#d51508 259px,#b50800 305px)"></i><i style="top:318px;left:181px;width:310px;height:3px;background:linear-gradient(90deg,#00ffd4 0px,#05ffd4 5px,#59ffd0 35px,#c1ffcc 64px,#fffdc8 79px,#ffc397 95px,#ff8e6c 117px,#ff6045 148px,#fe3623 196px,#d71509 257px,#af0700 310px)"></i><i style="top:321px;left:180px;width:316px;height:3px;background:linear-gradient(90deg,#00ffdc 0px,#05ffdc 5px,#58ffd9 34px,#c1ffd5 63px,#fffcd1 78px,#ffc29e 94px,#ff8d71 116px,#ff5e49 147px,#ff3627 193px,#d9150b 254px,#a90500 316px)"></i><i style="top:324px;left:179px;width:321px;height:3px;background:linear-gradient(90deg,#00ffe4 0px,#05ffe4 5px,#5affe1 34px,#c1ffdf 62px,#feffdd 76px,#ffc0a5 93px,#ff8b76 115px,#ff5d4d 146px,#ff3529 192px,#d9140d 254px,#a30300 321px)"></i><i style="top:327px;left:178px;width:327px;height:3px;background:linear-gradient(90deg,#00ffec 0px,#06ffec 5px,#58ffeb 33px,#c1ffe9 61px,#ffffe8 75px,#ffc5b2 90px,#ff8f81 111px,#ff6156 140px,#ff3830 184px,#f92a23 205px,#cc0d09 272px,#9c0200 327px)"></i><i style="top:330px;left:177px;width:332px;height:3px;background:linear-gradient(90deg,#00fff5 0px,#06fff5 5px,#5afff4 33px,#c1fff3 60px,#fffef2 74px,#ffc4ba 89px,#ff9088 109px,#ff615b 138px,#ff3834 181px,#fa2926 204px,#ce0c0a 271px,#9d0200 323px,#950000 332px)"></i><i style="top:333px;left:176px;width:335px;height:3px;background:linear-gradient(90deg,#00fffe 0px,#06fffe 5px,#58fffe 32px,#c1fffe 59px,#fffdfc 73px,#ffc2c1 88px,#ff8e8e 108px,#ff5f5f 137px,#ff3737 180px,#fb2727 204px,#ce0b0b 272px,#9f0101 322px,#8f0000 333px,#940000 335px)"></i><i style="top:336px;left:175px;width:334px;height:3px;background:linear-gradient(90deg,#00f8ff 0px,#06f7ff 5px,#5af6ff 33px,#c2f5ff 60px,#fff3fd 74px,#ffbac3 89px,#ff888f 109px,#ff5b61 138px,#ff3438 181px,#fb2529 205px,#ce090c 273px,#9d0001 326px,#960000 334px)"></i><i style="top:339px;left:174px;width:328px;height:3px;background:linear-gradient(90deg,#00efff 0px,#06efff 5px,#59edff 33px,#c2ebff 61px,#ffe9fe 75px,#ffb3c4 90px,#ff818f 111px,#ff5560 141px,#ff2f37 185px,#fb2229 207px,#cd080c 275px,#9f0002 328px)"></i><i style="top:342px;left:173px;width:323px;height:3px;background:linear-gradient(90deg,#00e7ff 0px,#06e6ff 5px,#5ae4ff 34px,#c2e1ff 62px,#ffdffe 76px,#ffabc5 91px,#ff7b90 112px,#ff5161 142px,#ff2d39 186px,#fb202b 208px,#ce070d 276px,#a70003 323px)"></i><i style="top:345px;left:172px;width:317px;height:3px;background:linear-gradient(90deg,#00dfff 0px,#06deff 5px,#59dbff 34px,#c2d7ff 63px,#ffd5ff 77px,#ffa1c4 93px,#ff7490 114px,#ff4c61 144px,#ff2939 189px,#fa1d2b 210px,#cd050d 279px,#af0005 317px)"></i><i style="top:348px;left:171px;width:311px;height:3px;background:linear-gradient(90deg,#00d7ff 0px,#05d6ff 5px,#5ad2ff 35px,#c3ceff 64px,#fecbff 78px,#ff98c2 95px,#ff6c8d 117px,#ff455f 148px,#ff2337 195px,#f81929 216px,#c8030c 287px,#b60007 311px)"></i><i style="top:351px;left:170px;width:306px;height:3px;background:linear-gradient(90deg,#00cfff 0px,#08ceff 6px,#5ccaff 36px,#c3c5ff 65px,#ffbffc 80px,#ff91c3 96px,#ff678f 118px,#ff4261 149px,#ff2138 196px,#f9172b 216px,#cb020e 286px,#bd0009 306px)"></i><i style="top:354px;left:169px;width:300px;height:3px;background:linear-gradient(90deg,#00c8ff 0px,#08c7ff 6px,#5dc2ff 37px,#c7bbff 67px,#ffb7fd 81px,#ff8ac4 97px,#ff6290 119px,#ff3d61 151px,#ff1e39 198px,#f8142b 219px,#ca000e 290px,#c3000b 300px)"></i><i style="top:357px;left:168px;width:295px;height:3px;background:linear-gradient(90deg,#00c1ff 0px,#08c0ff 6px,#5cbaff 37px,#c3b3ff 67px,#ffaefe 82px,#ff82c3 99px,#ff5b8e 122px,#ff375f 155px,#ff1937 204px,#d90315 271px,#c9000d 295px)"></i><i style="top:360px;left:167px;width:289px;height:3px;background:linear-gradient(90deg,#00baff 0px,#07b9ff 6px,#5db2ff 38px,#c7abff 69px,#ffa6ff 83px,#ff7cc4 100px,#ff568f 123px,#ff3460 156px,#ff1738 205px,#dd0317 267px,#cf0010 289px)"></i><i style="top:363px;left:166px;width:283px;height:3px;background:linear-gradient(90deg,#00b3ff 0px,#07b2ff 6px,#5cabff 38px,#c4a3ff 69px,#ff9eff 84px,#ff74c2 102px,#ff4f8d 126px,#ff2f5f 160px,#ff1336 211px,#d80015 277px,#d50013 283px)"></i><i style="top:366px;left:165px;width:278px;height:3px;background:linear-gradient(90deg,#00adff 0px,#07acff 6px,#5da4ff 39px,#c79bff 71px,#ff94fc 86px,#ff6cc1 104px,#ff4a8d 128px,#ff2a5e 163px,#fe0f35 216px,#da0016 278px)"></i><i style="top:369px;left:164px;width:272px;height:3px;background:linear-gradient(90deg,#00a7ff 0px,#07a5ff 6px,#5c9dff 39px,#c493ff 71px,#ff8dfd 87px,#ff67c2 105px,#ff458e 129px,#ff275f 164px,#ff0e37 216px,#df001a 272px)"></i><i style="top:372px;left:163px;width:267px;height:3px;background:linear-gradient(90deg,#00a1ff 0px,#099fff 7px,#6096ff 41px,#c88cff 73px,#ff85fd 88px,#ff61c3 106px,#ff408e 131px,#ff245f 166px,#ff0b37 219px,#e4001d 267px)"></i><i style="top:375px;left:162px;width:261px;height:3px;background:linear-gradient(90deg,#009bff 0px,#0999ff 7px,#5f90ff 41px,#c885ff 74px,#ff7efe 89px,#ff5cc4 107px,#ff3c8f 132px,#ff2161 167px,#ff0938 220px,#e90021 261px)"></i><i style="top:378px;left:161px;width:255px;height:3px;background:linear-gradient(90deg,#0095ff 0px,#0993ff 7px,#6089ff 42px,#c87eff 75px,#ff78ff 90px,#ff57c5 108px,#ff3890 133px,#ff1d61 169px,#ff0738 222px,#ee0025 255px)"></i><i style="top:381px;left:160px;width:250px;height:3px;background:linear-gradient(90deg,#0090ff 0px,#098eff 7px,#5f83ff 42px,#c877ff 76px,#ff71ff 91px,#ff50c4 110px,#ff338e 136px,#ff195f 173px,#fd0335 230px,#f2002a 250px)"></i><i style="top:384px;left:159px;width:244px;height:3px;background:linear-gradient(90deg,#008aff 0px,#0988ff 7px,#607dff 43px,#c870ff 77px,#ff69fc 93px,#ff4ac2 112px,#ff2e8e 138px,#ff165f 175px,#fd0135 233px,#f7002f 244px)"></i><i style="top:387px;left:158px;width:239px;height:3px;background:linear-gradient(90deg,#0085ff 0px,#0983ff 7px,#5e77ff 43px,#c86aff 78px,#ff62fd 94px,#ff45c3 113px,#ff2b8f 139px,#ff1361 176px,#ff0038 232px,#fc0033 239px)"></i><i style="top:390px;left:157px;width:233px;height:3px;background:linear-gradient(90deg,#0080ff 0px,#0b7dff 8px,#6271ff 45px,#cc64ff 80px,#ff5cfe 95px,#ff40c4 114px,#ff268f 141px,#ff1060 179px,#ff0039 233px)"></i><i style="top:393px;left:156px;width:228px;height:3px;background:linear-gradient(90deg,#007bff 0px,#0b78ff 8px,#616cff 45px,#cc5eff 81px,#ff56fe 96px,#ff3bc3 116px,#ff228e 143px,#ff0d5f 182px,#ff003d 228px)"></i><i style="top:396px;left:155px;width:222px;height:3px;background:linear-gradient(90deg,#0076ff 0px,#0a73ff 8px,#6266ff 46px,#cc58ff 82px,#ff51ff 97px,#ff36c4 117px,#ff1f90 144px,#ff0a60 183px,#ff0043 222px)"></i><i style="top:399px;left:154px;width:216px;height:3px;background:linear-gradient(90deg,#0071ff 0px,#0a6fff 8px,#6161ff 46px,#cc52ff 83px,#ff4afc 99px,#ff31c3 119px,#ff1a8e 147px,#ff075f 187px,#ff0048 216px)"></i><i style="top:402px;left:153px;width:211px;height:3px;background:linear-gradient(90deg,#006dff 0px,#0a6aff 8px,#625cff 47px,#cc4dff 84px,#ff44fd 100px,#ff2cc1 121px,#ff178d 149px,#ff045f 189px,#ff004d 211px)"></i><i style="top:405px;left:152px;width:205px;height:3px;background:linear-gradient(90deg,#0068ff 0px,#0c65ff 9px,#6357ff 48px,#cc47ff 85px,#ff3ffd 101px,#ff28c2 122px,#ff138d 151px,#ff015e 192px,#ff0054 205px)"></i><i style="top:408px;left:151px;width:200px;height:3px;background:linear-gradient(90deg,#0064ff 0px,#0c61ff 9px,#6452ff 49px,#cf41ff 87px,#ff3afe 102px,#ff24c3 123px,#ff108e 152px,#ff0060 193px,#ff005a 200px)"></i><i style="top:411px;left:150px;width:194px;height:3px;background:linear-gradient(90deg,#0060ff 0px,#0c5dff 9px,#634eff 49px,#cc3dff 87px,#ff35fe 103px,#ff20c4 124px,#ff0d8f 153px,#ff0061 194px)"></i><i style="top:414px;left:149px;width:188px;height:3px;background:linear-gradient(90deg,#005bff 0px,#0d58ff 10px,#6748ff 51px,#d237ff 90px,#ff30ff 104px,#ff1cc5 125px,#ff0a90 154px,#ff0068 188px)"></i><i style="top:417px;left:148px;width:183px;height:3px;background:linear-gradient(90deg,#0057ff 0px,#0d54ff 10px,#6544ff 51px,#cf33ff 90px,#ff2afc 106px,#ff17c2 128px,#ff068d 158px,#ff006f 183px)"></i><i style="top:420px;left:147px;width:177px;height:3px;background:linear-gradient(90deg,#0053ff 0px,#0d50ff 10px,#6640ff 52px,#cf2eff 91px,#ff25fd 107px,#ff13c3 129px,#ff048e 159px,#ff0078 177px)"></i><i style="top:423px;left:146px;width:172px;height:3px;background:linear-gradient(90deg,#0050ff 0px,#0f4cff 11px,#673bff 53px,#d229ff 93px,#ff21fd 108px,#ff10c4 130px,#ff018f 160px,#ff0080 172px)"></i><i style="top:426px;left:145px;width:166px;height:3px;background:linear-gradient(90deg,#004cff 0px,#0f48ff 11px,#6837ff 54px,#d224ff 94px,#ff1cfe 109px,#ff0dc4 131px,#ff008f 162px,#ff008a 166px)"></i><i style="top:429px;left:144px;width:160px;height:3px;background:linear-gradient(90deg,#0048ff 0px,#0e44ff 11px,#6733ff 54px,#d220ff 95px,#ff18fe 110px,#ff09c3 133px,#ff0094 160px)"></i><i style="top:432px;left:143px;width:155px;height:3px;background:linear-gradient(90deg,#0045ff 0px,#1040ff 12px,#6a2fff 56px,#d51bff 97px,#ff13fc 112px,#ff05c2 135px,#ff009e 155px)"></i><i style="top:435px;left:142px;width:149px;height:3px;background:linear-gradient(90deg,#0041ff 0px,#103dff 12px,#692bff 56px,#d517ff 98px,#ff0ffc 113px,#ff02c3 136px,#ff00ab 149px)"></i><i style="top:438px;left:141px;width:144px;height:3px;background:linear-gradient(90deg,#003eff 0px,#1239ff 13px,#6c27ff 58px,#d813ff 100px,#ff0bfd 114px,#ff00c2 138px,#ff00b6 144px)"></i><i style="top:441px;left:140px;width:138px;height:3px;background:linear-gradient(90deg,#003aff 0px,#1136ff 13px,#6b23ff 58px,#d510ff 100px,#ff08fe 115px,#ff00c5 138px)"></i><i style="top:444px;left:139px;width:132px;height:3px;background:linear-gradient(90deg,#0037ff 0px,#1332ff 14px,#6e1fff 60px,#da0bff 103px,#ff04fe 116px,#ff00d5 132px)"></i><i style="top:447px;left:138px;width:127px;height:3px;background:linear-gradient(90deg,#0034ff 0px,#142eff 15px,#6f1cff 61px,#da07ff 104px,#ff00fc 118px,#ff00e3 127px)"></i><i style="top:450px;left:136px;width:122px;height:3px;background:linear-gradient(90deg,#0031ff 0px,#092eff 9px,#5f1cff 55px,#c707ff 99px,#ff00fc 120px,#ff00f7 122px)"></i><i style="top:453px;left:135px;width:117px;height:3px;background:linear-gradient(90deg,#002eff 0px,#092bff 9px,#6018ff 56px,#ca03ff 101px,#f600ff 117px)"></i><i style="top:456px;left:134px;width:111px;height:3px;background:linear-gradient(90deg,#002bff 0px,#0928ff 9px,#5f15ff 56px,#c701ff 101px,#e200ff 111px)"></i><i style="top:459px;left:133px;width:105px;height:3px;background:linear-gradient(90deg,#0028ff 0px,#0a25ff 10px,#6211ff 58px,#cd00ff 104px,#cf00ff 105px)"></i><i style="top:462px;left:132px;width:100px;height:3px;background:linear-gradient(90deg,#0026ff 0px,#0a22ff 10px,#610fff 58px,#c000ff 100px)"></i><i style="top:465px;left:131px;width:94px;height:3px;background:linear-gradient(90deg,#0023ff 0px,#0a1fff 10px,#620cff 59px,#af00ff 94px)"></i><i style="top:468px;left:130px;width:89px;height:3px;background:linear-gradient(90deg,#0020ff 0px,#0a1cff 10px,#6109ff 59px,#a100ff 89px)"></i><i style="top:471px;left:129px;width:83px;height:3px;background:linear-gradient(90deg,#001dff 0px,#0a1aff 10px,#6106ff 60px,#9200ff 83px)"></i><i style="top:474px;left:128px;width:78px;height:3px;background:linear-gradient(90deg,#001bff 0px,#0a17ff 10px,#6004ff 60px,#8500ff 78px)"></i><i style="top:477px;left:127px;width:72px;height:3px;background:linear-gradient(90deg,#0018ff 0px,#0b14ff 11px,#6301ff 62px,#7700ff 72px)"></i><i style="top:480px;left:126px;width:66px;height:3px;background:linear-gradient(90deg,#0016ff 0px,#0b12ff 11px,#6200ff 62px,#6a00ff 66px)"></i><i style="top:483px;left:125px;width:61px;height:3px;background:linear-gradient(90deg,#0013ff 0px,#0b10ff 11px,#5f00ff 61px)"></i><i style="top:486px;left:124px;width:55px;height:3px;background:linear-gradient(90deg,#0011ff 0px,#0b0dff 11px,#5300ff 55px)"></i><i style="top:489px;left:123px;width:50px;height:3px;background:linear-gradient(90deg,#000fff 0px,#0b0bff 11px,#4900ff 50px)"></i><i style="top:492px;left:122px;width:44px;height:3px;background:linear-gradient(90deg,#000dff 0px,#0c08ff 12px,#3e00ff 44px)"></i><i style="top:495px;left:121px;width:38px;height:3px;background:linear-gradient(90deg,#000aff 0px,#0c06ff 12px,#3400ff 38px)"></i><i style="top:498px;left:120px;width:33px;height:3px;background:linear-gradient(90deg,#0008ff 0px,#0c04ff 12px,#2b00ff 33px)"></i><i style="top:501px;left:119px;width:27px;height:3px;background:linear-gradient(90deg,#0006ff 0px,#0c02ff 12px,#2100ff 27px)"></i><i style="top:504px;left:118px;width:22px;height:3px;background:linear-gradient(90deg,#0004ff 0px,#0d00ff 13px,#1a00ff 22px)"></i><i style="top:507px;left:117px;width:16px;height:3px;background:linear-gradient(90deg,#0002ff 0px,#0d00ff 13px,#1100ff 16px)"></i><i style="top:510px;left:117px;width:9px;height:2px;background:linear-gradient(90deg,#0001ff 0px,#0800ff 9px)"></i></div>
<span class="t" style="left:1236.50px;top:698.30px;font-size:15px;color:#dcdcdc;transform:scaleX(1.0787);">0</span>
<span class="t" style="left:1226.00px;top:681.30px;font-size:15px;color:#dcdcdc;transform:scaleX(1.0307);">0</span>
<span class="t" style="left:1309.73px;top:698.30px;font-size:15px;color:#dcdcdc;transform:scaleX(1.0261);">0,1</span>
<span class="t" style="left:1213.40px;top:615.80px;font-size:15px;color:#dcdcdc;transform:scaleX(1.0165);">0,1</span>
<span class="t" style="left:1389.16px;top:698.30px;font-size:15px;color:#dcdcdc;transform:scaleX(1.0261);">0,2</span>
<span class="t" style="left:1213.40px;top:550.30px;font-size:15px;color:#dcdcdc;transform:scaleX(1.0165);">0,2</span>
<span class="t" style="left:1468.59px;top:698.30px;font-size:15px;color:#dcdcdc;transform:scaleX(1.0261);">0,3</span>
<span class="t" style="left:1213.40px;top:484.80px;font-size:15px;color:#dcdcdc;transform:scaleX(1.0165);">0,3</span>
<span class="t" style="left:1548.02px;top:698.30px;font-size:15px;color:#dcdcdc;transform:scaleX(1.0261);">0,4</span>
<span class="t" style="left:1213.40px;top:419.30px;font-size:15px;color:#dcdcdc;transform:scaleX(1.0165);">0,4</span>
<span class="t" style="left:1627.45px;top:698.30px;font-size:15px;color:#dcdcdc;transform:scaleX(1.0261);">0,5</span>
<span class="t" style="left:1213.40px;top:353.80px;font-size:15px;color:#dcdcdc;transform:scaleX(1.0165);">0,5</span>
<span class="t" style="left:1706.88px;top:698.30px;font-size:15px;color:#dcdcdc;transform:scaleX(1.0261);">0,6</span>
<span class="t" style="left:1213.40px;top:288.30px;font-size:15px;color:#dcdcdc;transform:scaleX(1.0165);">0,6</span>
<span class="t" style="left:1786.31px;top:698.30px;font-size:15px;color:#dcdcdc;transform:scaleX(1.0261);">0,7</span>
<span class="t" style="left:1213.40px;top:222.80px;font-size:15px;color:#dcdcdc;transform:scaleX(1.0165);">0,7</span>
<span class="t" style="left:1865.74px;top:698.30px;font-size:15px;color:#dcdcdc;transform:scaleX(1.0261);">0,8</span>
<span class="t" style="left:1213.40px;top:157.30px;font-size:15px;color:#dcdcdc;transform:scaleX(1.0165);">0,8</span>
<span class="t" style="left:1521.50px;top:118.30px;font-size:15px;color:#dcdcdc;transform:scaleX(0.9545);">CIE 1931 xy</span>
<style>.ci{position:absolute;left:1718px;top:136px;width:191px;height:202px;}.ci i{position:absolute;display:block;}</style>
<div style="position:absolute;left:1718px;top:136px;width:191px;height:202px;overflow:hidden;"><div style="position:absolute;left:-1718px;top:-136px;"><div class="ci" style="clip-path:polygon(-19.1px 221.6px,210.1px 221.6px,210.1px -19.6px,-19.1px -19.6px);"><i style="top:0px;left:0px;width:191px;height:4px;background:linear-gradient(90deg,#6a9900 0px,#999700 160px,#998d00 191px)"></i><i style="top:4px;left:0px;width:191px;height:4px;background:linear-gradient(90deg,#6a9900 0px,#999600 158px,#998c00 191px)"></i><i style="top:8px;left:0px;width:191px;height:4px;background:linear-gradient(90deg,#6b9900 0px,#999600 156px,#998c00 191px)"></i><i style="top:12px;left:0px;width:191px;height:4px;background:linear-gradient(90deg,#6c9900 0px,#999700 153px,#998b00 191px)"></i><i style="top:16px;left:0px;width:191px;height:4px;background:linear-gradient(90deg,#6c9900 0px,#999700 151px,#998a00 191px)"></i><i style="top:20px;left:0px;width:191px;height:4px;background:linear-gradient(90deg,#6d9900 0px,#999600 149px,#998a00 191px)"></i><i style="top:24px;left:0px;width:191px;height:4px;background:linear-gradient(90deg,#6d9900 0px,#999700 146px,#998900 191px)"></i><i style="top:28px;left:0px;width:191px;height:4px;background:linear-gradient(90deg,#6e9901 0px,#999700 144px,#998800 191px)"></i><i style="top:32px;left:0px;width:191px;height:4px;background:linear-gradient(90deg,#6e9901 0px,#999600 142px,#998800 191px)"></i><i style="top:36px;left:0px;width:191px;height:4px;background:linear-gradient(90deg,#6f9901 0px,#999700 139px,#998700 191px)"></i><i style="top:40px;left:0px;width:191px;height:4px;background:linear-gradient(90deg,#709902 0px,#999700 137px,#998600 191px)"></i><i style="top:44px;left:0px;width:191px;height:4px;background:linear-gradient(90deg,#709902 0px,#999600 135px,#998600 191px)"></i><i style="top:48px;left:0px;width:191px;height:4px;background:linear-gradient(90deg,#719902 0px,#999700 132px,#998500 191px)"></i><i style="top:52px;left:0px;width:191px;height:4px;background:linear-gradient(90deg,#729903 0px,#999700 130px,#998400 191px)"></i><i style="top:56px;left:0px;width:191px;height:4px;background:linear-gradient(90deg,#729903 0px,#999600 128px,#998400 191px)"></i><i style="top:60px;left:0px;width:191px;height:4px;background:linear-gradient(90deg,#739903 0px,#999600 126px,#998300 191px)"></i><i style="top:64px;left:0px;width:191px;height:4px;background:linear-gradient(90deg,#739904 0px,#999700 123px,#998200 191px)"></i><i style="top:68px;left:0px;width:191px;height:4px;background:linear-gradient(90deg,#749904 0px,#999600 121px,#998200 191px)"></i><i style="top:72px;left:0px;width:191px;height:4px;background:linear-gradient(90deg,#759904 0px,#999600 119px,#998100 191px)"></i><i style="top:76px;left:0px;width:191px;height:4px;background:linear-gradient(90deg,#759905 0px,#999700 116px,#998000 191px)"></i><i style="top:80px;left:0px;width:191px;height:4px;background:linear-gradient(90deg,#769905 0px,#999600 114px,#998000 191px)"></i><i style="top:84px;left:0px;width:191px;height:4px;background:linear-gradient(90deg,#779905 0px,#999600 112px,#997f00 191px)"></i><i style="top:88px;left:0px;width:191px;height:4px;background:linear-gradient(90deg,#779906 0px,#999700 109px,#997e00 191px)"></i><i style="top:92px;left:0px;width:191px;height:4px;background:linear-gradient(90deg,#789906 0px,#999700 107px,#997e00 191px)"></i><i style="top:96px;left:0px;width:191px;height:4px;background:linear-gradient(90deg,#799906 0px,#999600 105px,#997d00 191px)"></i><i style="top:100px;left:0px;width:191px;height:4px;background:linear-gradient(90deg,#799907 0px,#999600 103px,#997c00 191px)"></i><i style="top:104px;left:0px;width:191px;height:4px;background:linear-gradient(90deg,#7a9907 0px,#999700 100px,#997c00 191px)"></i><i style="top:108px;left:0px;width:191px;height:4px;background:linear-gradient(90deg,#7b9908 0px,#999601 98px,#997b00 191px)"></i><i style="top:112px;left:0px;width:191px;height:4px;background:linear-gradient(90deg,#7b9908 0px,#999601 96px,#997b00 191px)"></i><i style="top:116px;left:0px;width:191px;height:4px;background:linear-gradient(90deg,#7c9908 0px,#999702 93px,#997a00 191px)"></i><i style="top:120px;left:0px;width:191px;height:4px;background:linear-gradient(90deg,#7d9909 0px,#999602 91px,#997900 191px)"></i><i style="top:124px;left:0px;width:191px;height:4px;background:linear-gradient(90deg,#7d9909 0px,#999603 89px,#997900 191px)"></i><i style="top:128px;left:0px;width:191px;height:4px;background:linear-gradient(90deg,#7e9909 0px,#999703 86px,#997800 191px)"></i><i style="top:132px;left:0px;width:191px;height:4px;background:linear-gradient(90deg,#7f990a 0px,#999604 84px,#997700 191px)"></i><i style="top:136px;left:0px;width:191px;height:4px;background:linear-gradient(90deg,#7f990a 0px,#999604 82px,#997700 191px)"></i><i style="top:140px;left:0px;width:191px;height:4px;background:linear-gradient(90deg,#80990b 0px,#999605 80px,#997600 191px)"></i><i style="top:144px;left:0px;width:191px;height:4px;background:linear-gradient(90deg,#81990b 0px,#999605 77px,#997600 191px)"></i><i style="top:148px;left:0px;width:191px;height:4px;background:linear-gradient(90deg,#82990b 0px,#999606 75px,#997500 191px)"></i><i style="top:152px;left:0px;width:191px;height:4px;background:linear-gradient(90deg,#82990c 0px,#999606 73px,#997400 191px)"></i><i style="top:156px;left:0px;width:191px;height:4px;background:linear-gradient(90deg,#83990c 0px,#999607 70px,#997400 191px)"></i><i style="top:160px;left:0px;width:191px;height:4px;background:linear-gradient(90deg,#84990c 0px,#999608 68px,#997300 191px)"></i><i style="top:164px;left:0px;width:191px;height:4px;background:linear-gradient(90deg,#84990d 0px,#999608 66px,#997200 191px)"></i><i style="top:168px;left:0px;width:191px;height:4px;background:linear-gradient(90deg,#85990d 0px,#999609 64px,#997200 191px)"></i><i style="top:172px;left:0px;width:191px;height:4px;background:linear-gradient(90deg,#86990e 0px,#999609 61px,#997100 191px)"></i><i style="top:176px;left:0px;width:191px;height:4px;background:linear-gradient(90deg,#87990e 0px,#99960a 59px,#997100 191px)"></i><i style="top:180px;left:0px;width:191px;height:4px;background:linear-gradient(90deg,#87990e 0px,#99960a 57px,#997000 191px)"></i><i style="top:184px;left:0px;width:191px;height:4px;background:linear-gradient(90deg,#88990f 0px,#99960b 55px,#996f00 191px)"></i><i style="top:188px;left:0px;width:191px;height:4px;background:linear-gradient(90deg,#89990f 0px,#99960b 52px,#996f01 191px)"></i><i style="top:192px;left:0px;width:191px;height:4px;background:linear-gradient(90deg,#8a9910 0px,#99960c 50px,#996e01 191px)"></i><i style="top:196px;left:0px;width:191px;height:4px;background:linear-gradient(90deg,#8b9910 0px,#99960d 48px,#996e01 191px)"></i><i style="top:200px;left:0px;width:191px;height:2px;background:linear-gradient(90deg,#8b9910 0px,#99960d 46px,#996d01 191px)"></i></div><div class="ci" style="clip-path:polygon(-19.1px 221.6px,210.1px 221.6px,210.1px 196.9px,-19.1px 5.4px);"><i style="top:20px;left:0px;width:7px;height:4px;background:linear-gradient(90deg,#b2ff00 0px,#b6ff00 7px)"></i><i style="top:24px;left:0px;width:12px;height:4px;background:linear-gradient(90deg,#b3ff00 0px,#b9ff00 12px)"></i><i style="top:28px;left:0px;width:16px;height:4px;background:linear-gradient(90deg,#b4ff01 0px,#bcff00 16px)"></i><i style="top:32px;left:0px;width:21px;height:4px;background:linear-gradient(90deg,#b5ff01 0px,#c0ff00 21px)"></i><i style="top:36px;left:0px;width:26px;height:4px;background:linear-gradient(90deg,#b6ff02 0px,#c4ff00 26px)"></i><i style="top:40px;left:0px;width:31px;height:4px;background:linear-gradient(90deg,#b7ff02 0px,#c8ff00 31px)"></i><i style="top:44px;left:0px;width:36px;height:4px;background:linear-gradient(90deg,#b8ff03 0px,#cbff00 36px)"></i><i style="top:48px;left:0px;width:40px;height:4px;background:linear-gradient(90deg,#b9ff03 0px,#cfff00 40px)"></i><i style="top:52px;left:0px;width:45px;height:4px;background:linear-gradient(90deg,#baff04 0px,#d3ff00 45px)"></i><i style="top:56px;left:0px;width:50px;height:4px;background:linear-gradient(90deg,#bbff04 0px,#d6ff00 50px)"></i><i style="top:60px;left:0px;width:55px;height:4px;background:linear-gradient(90deg,#bdff05 0px,#daff00 55px)"></i><i style="top:64px;left:0px;width:60px;height:4px;background:linear-gradient(90deg,#beff05 0px,#deff00 60px)"></i><i style="top:68px;left:0px;width:64px;height:4px;background:linear-gradient(90deg,#bfff06 0px,#e2ff00 64px)"></i><i style="top:72px;left:0px;width:69px;height:4px;background:linear-gradient(90deg,#c0ff06 0px,#e6ff00 69px)"></i><i style="top:76px;left:0px;width:74px;height:4px;background:linear-gradient(90deg,#c1ff07 0px,#eaff00 74px)"></i><i style="top:80px;left:0px;width:79px;height:4px;background:linear-gradient(90deg,#c2ff07 0px,#efff00 79px)"></i><i style="top:84px;left:0px;width:84px;height:4px;background:linear-gradient(90deg,#c3ff08 0px,#f3ff00 84px)"></i><i style="top:88px;left:0px;width:88px;height:4px;background:linear-gradient(90deg,#c4ff08 0px,#f7ff00 88px)"></i><i style="top:92px;left:0px;width:93px;height:4px;background:linear-gradient(90deg,#c5ff09 0px,#fbff00 93px)"></i><i style="top:96px;left:0px;width:98px;height:4px;background:linear-gradient(90deg,#c7ff09 0px,#ffff00 98px)"></i><i style="top:100px;left:0px;width:103px;height:4px;background:linear-gradient(90deg,#c8ff0a 0px,#fffd00 99px,#fffa00 103px)"></i><i style="top:104px;left:0px;width:107px;height:4px;background:linear-gradient(90deg,#c9ff0a 0px,#fffc00 97px,#fff700 107px)"></i><i style="top:108px;left:0px;width:112px;height:4px;background:linear-gradient(90deg,#caff0b 0px,#fffd01 94px,#fff200 112px)"></i><i style="top:112px;left:0px;width:117px;height:4px;background:linear-gradient(90deg,#cbff0b 0px,#fffd02 92px,#ffee00 117px)"></i><i style="top:116px;left:0px;width:122px;height:4px;background:linear-gradient(90deg,#ccff0c 0px,#fffd03 90px,#ffea00 122px)"></i><i style="top:120px;left:0px;width:127px;height:4px;background:linear-gradient(90deg,#ceff0c 0px,#fffd03 87px,#ffe600 127px)"></i><i style="top:124px;left:0px;width:131px;height:4px;background:linear-gradient(90deg,#cfff0d 0px,#fffd04 85px,#ffe300 131px)"></i><i style="top:128px;left:0px;width:136px;height:4px;background:linear-gradient(90deg,#d0ff0e 0px,#fffd05 83px,#ffdf00 136px)"></i><i style="top:132px;left:0px;width:141px;height:4px;background:linear-gradient(90deg,#d1ff0e 0px,#fffc06 81px,#ffdb00 141px)"></i><i style="top:136px;left:0px;width:146px;height:4px;background:linear-gradient(90deg,#d2ff0f 0px,#fffd06 78px,#ffd800 146px)"></i><i style="top:140px;left:0px;width:151px;height:4px;background:linear-gradient(90deg,#d4ff0f 0px,#fffd07 76px,#ffd400 151px)"></i><i style="top:144px;left:0px;width:155px;height:4px;background:linear-gradient(90deg,#d5ff10 0px,#fffc08 74px,#ffd100 155px)"></i><i style="top:148px;left:0px;width:160px;height:4px;background:linear-gradient(90deg,#d6ff11 0px,#fffd09 71px,#ffce00 160px)"></i><i style="top:152px;left:0px;width:165px;height:4px;background:linear-gradient(90deg,#d7ff11 0px,#fffd0a 69px,#ffca00 165px)"></i><i style="top:156px;left:0px;width:170px;height:4px;background:linear-gradient(90deg,#d9ff12 0px,#fffc0a 67px,#ffc700 170px)"></i><i style="top:160px;left:0px;width:175px;height:4px;background:linear-gradient(90deg,#daff12 0px,#fffd0b 64px,#ffc700 168px,#ffc400 175px)"></i><i style="top:164px;left:0px;width:179px;height:4px;background:linear-gradient(90deg,#dbff13 0px,#fffd0c 62px,#ffc601 166px,#ffc100 179px)"></i><i style="top:168px;left:0px;width:184px;height:4px;background:linear-gradient(90deg,#dcff14 0px,#fffd0d 60px,#ffc601 164px,#ffbe00 184px)"></i><i style="top:172px;left:0px;width:189px;height:4px;background:linear-gradient(90deg,#deff14 0px,#fffc0e 58px,#ffc602 162px,#ffbb00 189px)"></i><i style="top:176px;left:0px;width:191px;height:4px;background:linear-gradient(90deg,#dfff15 0px,#fffd0f 55px,#ffc602 159px,#ffb900 191px)"></i><i style="top:180px;left:0px;width:191px;height:4px;background:linear-gradient(90deg,#e0ff15 0px,#fffd10 53px,#ffc603 156px,#ffb800 191px)"></i><i style="top:184px;left:0px;width:191px;height:4px;background:linear-gradient(90deg,#e2ff16 0px,#fffc10 51px,#ffc604 154px,#ffb700 191px)"></i><i style="top:188px;left:0px;width:191px;height:4px;background:linear-gradient(90deg,#e3ff17 0px,#fffd11 48px,#ffc605 151px,#ffb601 191px)"></i><i style="top:192px;left:0px;width:191px;height:4px;background:linear-gradient(90deg,#e4ff17 0px,#fffd12 46px,#ffc605 149px,#ffb501 191px)"></i><i style="top:196px;left:0px;width:191px;height:4px;background:linear-gradient(90deg,#e6ff18 0px,#fffc13 44px,#ffc606 147px,#ffb402 191px)"></i><i style="top:200px;left:0px;width:191px;height:2px;background:linear-gradient(90deg,#e7ff19 0px,#fffd14 42px,#ffc606 144px,#ffb302 191px)"></i></div></div></div>
<svg width="1920" height="1080" viewBox="0 0 1920 1080"><rect x="1240.5" y="136.5" width="668" height="551" fill="none" stroke="#a2a2a2" stroke-width="1"/><rect x="1241.5" y="137.5" width="666" height="549" fill="none" stroke="#747474" stroke-width="1"/><rect x="1240" y="686" width="669" height="2.2" fill="#989898"/><rect x="1240.1" y="688" width="1.8" height="5.8" fill="#d8d8d8"/><rect x="1235" y="686.5" width="5" height="1.5" fill="#d0d0d0"/><rect x="1319.5" y="688" width="1.8" height="5.8" fill="#d8d8d8"/><rect x="1235" y="621.0" width="5" height="1.5" fill="#d0d0d0"/><rect x="1399.0" y="688" width="1.8" height="5.8" fill="#d8d8d8"/><rect x="1235" y="555.5" width="5" height="1.5" fill="#d0d0d0"/><rect x="1478.4" y="688" width="1.8" height="5.8" fill="#d8d8d8"/><rect x="1235" y="490.0" width="5" height="1.5" fill="#d0d0d0"/><rect x="1557.8" y="688" width="1.8" height="5.8" fill="#d8d8d8"/><rect x="1235" y="424.5" width="5" height="1.5" fill="#d0d0d0"/><rect x="1637.2" y="688" width="1.8" height="5.8" fill="#d8d8d8"/><rect x="1235" y="359.0" width="5" height="1.5" fill="#d0d0d0"/><rect x="1716.7" y="688" width="1.8" height="5.8" fill="#d8d8d8"/><rect x="1235" y="293.5" width="5" height="1.5" fill="#d0d0d0"/><rect x="1796.1" y="688" width="1.8" height="5.8" fill="#d8d8d8"/><rect x="1235" y="228.0" width="5" height="1.5" fill="#d0d0d0"/><rect x="1875.5" y="688" width="1.8" height="5.8" fill="#d8d8d8"/><rect x="1235" y="162.5" width="5" height="1.5" fill="#d0d0d0"/><rect x="1716.5" y="137" width="1.5" height="203" fill="#262626"/><rect x="1716.5" y="338" width="191" height="1.8" fill="#262626"/><rect x="1718.5" y="136.5" width="190" height="201" fill="none" stroke="#9a9a9a" stroke-width="1.2"/><rect x="1805.7" y="229" width="16" height="16" fill="none" stroke="#fff" stroke-width="1.4"/><circle cx="1846" cy="194" r="5.1" fill="#c4c400" stroke="#000" stroke-width="1.2"/><rect x="1470.5" y="284.8" width="16" height="16" fill="#fff" fill-opacity="0.04" stroke="#fff" stroke-width="1.3"/><rect x="1473.7" y="323.3" width="16" height="16" fill="#fff" fill-opacity="0.04" stroke="#fff" stroke-width="1.3"/><rect x="1475.0" y="357.3" width="16" height="16" fill="#fff" fill-opacity="0.04" stroke="#fff" stroke-width="1.3"/><rect x="1476.5" y="393.0" width="16" height="16" fill="#fff" fill-opacity="0.04" stroke="#fff" stroke-width="1.3"/><rect x="1479.5" y="426.6" width="16" height="16" fill="#fff" fill-opacity="0.04" stroke="#fff" stroke-width="1.3"/><rect x="1566.5" y="347.0" width="16" height="16" fill="#fff" fill-opacity="0.04" stroke="#fff" stroke-width="1.3"/><rect x="1548.2" y="372.0" width="16" height="16" fill="#fff" fill-opacity="0.04" stroke="#fff" stroke-width="1.3"/><rect x="1532.5" y="393.0" width="16" height="16" fill="#fff" fill-opacity="0.04" stroke="#fff" stroke-width="1.3"/><rect x="1515.5" y="415.2" width="16" height="16" fill="#fff" fill-opacity="0.04" stroke="#fff" stroke-width="1.3"/><rect x="1497.5" y="439.0" width="16" height="16" fill="#fff" fill-opacity="0.04" stroke="#fff" stroke-width="1.3"/><rect x="1410.8" y="463.0" width="16" height="16" fill="#fff" fill-opacity="0.04" stroke="#fff" stroke-width="1.3"/><rect x="1426.5" y="463.0" width="16" height="16" fill="#fff" fill-opacity="0.04" stroke="#fff" stroke-width="1.3"/><rect x="1441.0" y="463.0" width="16" height="16" fill="#fff" fill-opacity="0.04" stroke="#fff" stroke-width="1.3"/><rect x="1454.5" y="463.0" width="16" height="16" fill="#fff" fill-opacity="0.04" stroke="#fff" stroke-width="1.3"/><rect x="1467.5" y="463.0" width="16" height="16" fill="#fff" fill-opacity="0.04" stroke="#fff" stroke-width="1.3"/><rect x="1531.4" y="463.0" width="16" height="16" fill="#fff" fill-opacity="0.04" stroke="#fff" stroke-width="1.3"/><rect x="1585.3" y="463.0" width="16" height="16" fill="#fff" fill-opacity="0.04" stroke="#fff" stroke-width="1.3"/><rect x="1632.3" y="463.0" width="16" height="16" fill="#fff" fill-opacity="0.04" stroke="#fff" stroke-width="1.3"/><rect x="1684.0" y="463.0" width="16" height="16" fill="#fff" fill-opacity="0.04" stroke="#fff" stroke-width="1.3"/><rect x="1741.4" y="463.0" width="16" height="16" fill="#fff" fill-opacity="0.04" stroke="#fff" stroke-width="1.3"/><rect x="1482.0" y="486.3" width="16" height="16" fill="#fff" fill-opacity="0.04" stroke="#fff" stroke-width="1.3"/><rect x="1483.5" y="510.0" width="16" height="16" fill="#fff" fill-opacity="0.04" stroke="#fff" stroke-width="1.3"/><rect x="1484.3" y="530.8" width="16" height="16" fill="#fff" fill-opacity="0.04" stroke="#fff" stroke-width="1.3"/><rect x="1486.5" y="553.0" width="16" height="16" fill="#fff" fill-opacity="0.04" stroke="#fff" stroke-width="1.3"/><rect x="1487.5" y="577.0" width="16" height="16" fill="#fff" fill-opacity="0.04" stroke="#fff" stroke-width="1.3"/><rect x="1455.5" y="498.0" width="16" height="16" fill="#fff" fill-opacity="0.04" stroke="#fff" stroke-width="1.3"/><rect x="1428.5" y="534.0" width="16" height="16" fill="#fff" fill-opacity="0.04" stroke="#fff" stroke-width="1.3"/><rect x="1405.0" y="566.4" width="16" height="16" fill="#fff" fill-opacity="0.04" stroke="#fff" stroke-width="1.3"/><rect x="1379.3" y="600.3" width="16" height="16" fill="#fff" fill-opacity="0.04" stroke="#fff" stroke-width="1.3"/><rect x="1351.4" y="638.8" width="16" height="16" fill="#fff" fill-opacity="0.04" stroke="#fff" stroke-width="1.3"/><rect x="1480.3" y="462.8" width="16.4" height="16.4" fill="#fff" fill-opacity="0.3" stroke="#000" stroke-width="1.8"/><circle cx="1481.5" cy="281" r="5.1" fill="#00a800" stroke="#000" stroke-width="1.2"/><circle cx="1484.5" cy="326.8" r="5.1" fill="#46b846" stroke="#000" stroke-width="1.2"/><circle cx="1487.5" cy="365.5" r="5.1" fill="#6ab86a" stroke="#000" stroke-width="1.2"/><circle cx="1488.5" cy="397" r="5.1" fill="#82bc82" stroke="#000" stroke-width="1.2"/><circle cx="1490" cy="434" r="5.1" fill="#98bc98" stroke="#000" stroke-width="1.2"/><circle cx="1579.5" cy="348.8" r="5.1" fill="#c4c400" stroke="#000" stroke-width="1.2"/><circle cx="1560.5" cy="375.8" r="5.1" fill="#bcbc5a" stroke="#000" stroke-width="1.2"/><circle cx="1543.5" cy="400" r="5.1" fill="#bcba72" stroke="#000" stroke-width="1.2"/><circle cx="1527.8" cy="420.5" r="5.1" fill="#bcbc88" stroke="#000" stroke-width="1.2"/><circle cx="1508.5" cy="447" r="5.1" fill="#bcbc9c" stroke="#000" stroke-width="1.2"/><circle cx="1418.3" cy="473.8" r="5.1" fill="#00bcbc" stroke="#000" stroke-width="1.2"/><circle cx="1435.3" cy="473.8" r="5.1" fill="#58bcbc" stroke="#000" stroke-width="1.2"/><circle cx="1448" cy="471.7" r="5.1" fill="#7cbcb8" stroke="#000" stroke-width="1.2"/><circle cx="1462" cy="472" r="5.1" fill="#90bcb8" stroke="#000" stroke-width="1.2"/><circle cx="1475.8" cy="472" r="5.1" fill="#a4bcba" stroke="#000" stroke-width="1.2"/><circle cx="1544.2" cy="471" r="5.1" fill="#c08888" stroke="#000" stroke-width="1.2"/><circle cx="1592.2" cy="468.9" r="5.1" fill="#c06064" stroke="#000" stroke-width="1.2"/><circle cx="1637.2" cy="467.8" r="5.1" fill="#c04850" stroke="#000" stroke-width="1.2"/><circle cx="1690.5" cy="465" r="5.1" fill="#c03038" stroke="#000" stroke-width="1.2"/><circle cx="1745.5" cy="462.8" r="5.1" fill="#c40000" stroke="#000" stroke-width="1.2"/><circle cx="1491.5" cy="494.3" r="5.1" fill="#bc9cb8" stroke="#000" stroke-width="1.2"/><circle cx="1492.3" cy="521" r="5.1" fill="#bc84b4" stroke="#000" stroke-width="1.2"/><circle cx="1492.3" cy="537" r="5.1" fill="#bc6cb4" stroke="#000" stroke-width="1.2"/><circle cx="1494.5" cy="560" r="5.1" fill="#bc4cb0" stroke="#000" stroke-width="1.2"/><circle cx="1495.5" cy="583" r="5.1" fill="#bc00b4" stroke="#000" stroke-width="1.2"/><circle cx="1463.5" cy="508.8" r="5.1" fill="#9898bc" stroke="#000" stroke-width="1.2"/><circle cx="1438.5" cy="545" r="5.1" fill="#8484bc" stroke="#000" stroke-width="1.2"/><circle cx="1417.5" cy="574.5" r="5.1" fill="#6868bc" stroke="#000" stroke-width="1.2"/><circle cx="1390.2" cy="608.3" r="5.1" fill="#4848b8" stroke="#000" stroke-width="1.2"/><circle cx="1360.3" cy="646.8" r="5.1" fill="#0000a0" stroke="#000" stroke-width="1.2"/><circle cx="1491.5" cy="471" r="5.1" fill="#fff" stroke="#000" stroke-width="1.2"/></svg>
<div style="position:absolute;left:1205.5px;top:735px;width:611.5px;height:33.700000000000045px;background:linear-gradient(#2f2f2f 0%,#2a2a2a 47%,#181818 52%,#101010 100%);"></div>
<div style="position:absolute;left:1205.5px;top:735px;width:20px;height:33.700000000000045px;background:#000;"></div>
<span class="t" style="left:1397.60px;top:743.69px;font-size:19.5px;color:#f4f4f4;transform:scaleX(1.0505);-webkit-text-stroke:0.45px #f4f4f4;">20%</span>
<span class="t" style="left:1483.00px;top:743.69px;font-size:19.5px;color:#f4f4f4;transform:scaleX(1.0505);-webkit-text-stroke:0.45px #f4f4f4;">40%</span>
<span class="t" style="left:1568.20px;top:743.69px;font-size:19.5px;color:#f4f4f4;transform:scaleX(1.0505);-webkit-text-stroke:0.45px #f4f4f4;">60%</span>
<span class="t" style="left:1653.60px;top:743.69px;font-size:19.5px;color:#f4f4f4;transform:scaleX(1.0505);-webkit-text-stroke:0.45px #f4f4f4;">80%</span>
<span class="t" style="left:1738.80px;top:743.69px;font-size:19.5px;color:#f4f4f4;transform:scaleX(1.0828);-webkit-text-stroke:0.45px #f4f4f4;">100%</span>
<div style="position:absolute;left:1205.5px;top:768.7px;width:611.5px;height:30.899999999999977px;background:#404040;"></div>
<div style="position:absolute;left:1205.5px;top:768.7px;width:20px;height:30.899999999999977px;background:linear-gradient(90deg,#262626,#303030);border-top:1px solid #3a3a3a;"></div>
<span class="t" style="left:1232.60px;top:774.79px;font-size:19.5px;color:#f4f4f4;transform:scaleX(1.0832);">x: CIE31</span>
<span class="t" style="left:1397.60px;top:774.79px;font-size:19.5px;color:#f4f4f4;transform:scaleX(1.1384);">0,34</span>
<span class="t" style="left:1483.00px;top:774.79px;font-size:19.5px;color:#f4f4f4;transform:scaleX(1.1384);">0,36</span>
<span class="t" style="left:1568.20px;top:774.79px;font-size:19.5px;color:#f4f4f4;transform:scaleX(1.1384);">0,38</span>
<span class="t" style="left:1653.60px;top:774.79px;font-size:19.5px;color:#f4f4f4;transform:scaleX(1.1384);">0,40</span>
<span class="t" style="left:1738.80px;top:774.79px;font-size:19.5px;color:#f4f4f4;transform:scaleX(1.1384);">0,43</span>
<div style="position:absolute;left:1205.5px;top:799.6px;width:611.5px;height:31.0px;background:#808080;"></div>
<div style="position:absolute;left:1205.5px;top:799.6px;width:20px;height:31.0px;background:linear-gradient(90deg,#262626,#303030);border-top:1px solid #3a3a3a;"></div>
<span class="t" style="left:1232.60px;top:805.69px;font-size:19.5px;color:#f4f4f4;transform:scaleX(1.0832);">y: CIE31</span>
<span class="t" style="left:1397.60px;top:805.69px;font-size:19.5px;color:#f4f4f4;transform:scaleX(1.1384);">0,37</span>
<span class="t" style="left:1483.00px;top:805.69px;font-size:19.5px;color:#f4f4f4;transform:scaleX(1.1384);">0,41</span>
<span class="t" style="left:1568.20px;top:805.69px;font-size:19.5px;color:#f4f4f4;transform:scaleX(1.1384);">0,44</span>
<span class="t" style="left:1653.60px;top:805.69px;font-size:19.5px;color:#f4f4f4;transform:scaleX(1.1384);">0,47</span>
<span class="t" style="left:1738.80px;top:805.69px;font-size:19.5px;color:#f4f4f4;transform:scaleX(1.1384);">0,52</span>
<div style="position:absolute;left:1205.5px;top:830.6px;width:611.5px;height:31.100000000000023px;background:#404040;"></div>
<div style="position:absolute;left:1205.5px;top:830.6px;width:20px;height:31.100000000000023px;background:linear-gradient(90deg,#262626,#303030);border-top:1px solid #3a3a3a;"></div>
<span class="t" style="left:1232.60px;top:836.69px;font-size:19.5px;color:#f4f4f4;transform:scaleX(0.9610);">Y</span>
<span class="t" style="left:1397.60px;top:836.69px;font-size:19.5px;color:#f4f4f4;transform:scaleX(1.1943);">116,90</span>
<span class="t" style="left:1483.00px;top:836.69px;font-size:19.5px;color:#f4f4f4;transform:scaleX(1.1943);">114,66</span>
<span class="t" style="left:1568.20px;top:836.69px;font-size:19.5px;color:#f4f4f4;transform:scaleX(1.1943);">113,20</span>
<span class="t" style="left:1653.60px;top:836.69px;font-size:19.5px;color:#f4f4f4;transform:scaleX(1.2248);">111,92</span>
<span class="t" style="left:1738.80px;top:836.69px;font-size:19.5px;color:#f4f4f4;transform:scaleX(1.1654);">109,36</span>
<div style="position:absolute;left:1205.5px;top:861.7px;width:611.5px;height:30.59999999999991px;background:#808080;"></div>
<div style="position:absolute;left:1205.5px;top:861.7px;width:20px;height:30.59999999999991px;background:linear-gradient(90deg,#262626,#303030);border-top:1px solid #3a3a3a;"></div>
<span class="t" style="left:1232.60px;top:867.79px;font-size:19.5px;color:#f4f4f4;transform:scaleX(1.1398);">Target x:CIE31</span>
<span class="t" style="left:1397.60px;top:867.79px;font-size:19.5px;color:#f4f4f4;transform:scaleX(1.1384);">0,33</span>
<span class="t" style="left:1483.00px;top:867.79px;font-size:19.5px;color:#f4f4f4;transform:scaleX(1.1384);">0,36</span>
<span class="t" style="left:1568.20px;top:867.79px;font-size:19.5px;color:#f4f4f4;transform:scaleX(1.1384);">0,38</span>
<span class="t" style="left:1653.60px;top:867.79px;font-size:19.5px;color:#f4f4f4;transform:scaleX(1.1384);">0,40</span>
<span class="t" style="left:1738.80px;top:867.79px;font-size:19.5px;color:#f4f4f4;transform:scaleX(1.1384);">0,42</span>
<div style="position:absolute;left:1205.5px;top:892.3px;width:611.5px;height:30.90000000000009px;background:#404040;"></div>
<div style="position:absolute;left:1205.5px;top:892.3px;width:20px;height:30.90000000000009px;background:linear-gradient(90deg,#262626,#303030);border-top:1px solid #3a3a3a;"></div>
<span class="t" style="left:1232.60px;top:898.39px;font-size:19.5px;color:#f4f4f4;transform:scaleX(1.1398);">Target y:CIE31</span>
<span class="t" style="left:1397.60px;top:898.39px;font-size:19.5px;color:#f4f4f4;transform:scaleX(1.1384);">0,36</span>
<span class="t" style="left:1483.00px;top:898.39px;font-size:19.5px;color:#f4f4f4;transform:scaleX(1.1384);">0,40</span>
<span class="t" style="left:1568.20px;top:898.39px;font-size:19.5px;color:#f4f4f4;transform:scaleX(1.1384);">0,44</span>
<span class="t" style="left:1653.60px;top:898.39px;font-size:19.5px;color:#f4f4f4;transform:scaleX(1.1384);">0,47</span>
<span class="t" style="left:1738.80px;top:898.39px;font-size:19.5px;color:#f4f4f4;transform:scaleX(1.1384);">0,51</span>
<div style="position:absolute;left:1205.5px;top:923.2px;width:611.5px;height:30.799999999999955px;background:#808080;"></div>
<div style="position:absolute;left:1205.5px;top:923.2px;width:20px;height:30.799999999999955px;background:linear-gradient(90deg,#262626,#303030);border-top:1px solid #3a3a3a;"></div>
<span class="t" style="left:1232.60px;top:929.29px;font-size:19.5px;color:#f4f4f4;transform:scaleX(1.1762);">Target Y</span>
<span class="t" style="left:1397.60px;top:929.29px;font-size:19.5px;color:#f4f4f4;transform:scaleX(1.1654);">108,57</span>
<span class="t" style="left:1483.00px;top:929.29px;font-size:19.5px;color:#f4f4f4;transform:scaleX(1.1654);">106,66</span>
<span class="t" style="left:1568.20px;top:929.29px;font-size:19.5px;color:#f4f4f4;transform:scaleX(1.1654);">105,20</span>
<span class="t" style="left:1653.60px;top:929.29px;font-size:19.5px;color:#f4f4f4;transform:scaleX(1.1654);">104,05</span>
<span class="t" style="left:1738.80px;top:929.29px;font-size:19.5px;color:#f4f4f4;transform:scaleX(1.1654);">102,94</span>
<div style="position:absolute;left:200px;top:978px;width:1720px;height:62px;background:linear-gradient(#4b4b4b,#3c3c3c 40%,#282828);"></div>
<div style="position:absolute;left:201.5px;top:978px;width:44.5px;height:61.5px;background:linear-gradient(#a0a0a0,#5a5a5a);border-radius:4px;"></div>
<div style="position:absolute;left:216px;top:979.5px;width:15px;height:15px;border-radius:50%;background:linear-gradient(#707070,#909090);"></div>
<div style="position:absolute;left:206px;top:1004.5px;width:35.5px;height:30px;background:#ffff00;border-radius:3px;"></div>
<div style="position:absolute;left:252px;top:978px;width:150px;height:61px;background:linear-gradient(#a4a4a4 0%,#8e8e8e 30%,#5e5e5e 100%);border-radius:5px;border-top:1px solid #b4b4b4;"></div>
<div style="position:absolute;left:257px;top:983px;width:140.3px;height:36px;background:#c2c2a4;border-radius:3px;box-shadow:inset 0 1px 2px rgba(0,0,0,0.35);"></div>
<span class="t" style="left:316.41px;top:1025.27px;font-size:11.5px;color:#2e2e2e;transform:scaleX(0.9200);font-weight:bold;">20%</span>
<div style="position:absolute;left:404px;top:978px;width:150px;height:61px;background:linear-gradient(#a4a4a4 0%,#8e8e8e 30%,#5e5e5e 100%);border-radius:5px;border-top:1px solid #b4b4b4;"></div>
<div style="position:absolute;left:409px;top:983px;width:140.3px;height:36px;background:#c2c086;border-radius:3px;box-shadow:inset 0 1px 2px rgba(0,0,0,0.35);"></div>
<span class="t" style="left:468.41px;top:1025.27px;font-size:11.5px;color:#2e2e2e;transform:scaleX(0.9200);font-weight:bold;">40%</span>
<div style="position:absolute;left:556px;top:978px;width:150px;height:61px;background:linear-gradient(#a4a4a4 0%,#8e8e8e 30%,#5e5e5e 100%);border-radius:5px;border-top:1px solid #b4b4b4;"></div>
<div style="position:absolute;left:561px;top:983px;width:140.3px;height:36px;background:#c1c06c;border-radius:3px;box-shadow:inset 0 1px 2px rgba(0,0,0,0.35);"></div>
<span class="t" style="left:620.41px;top:1025.27px;font-size:11.5px;color:#2e2e2e;transform:scaleX(0.9200);font-weight:bold;">60%</span>
<div style="position:absolute;left:708px;top:978px;width:150px;height:61px;background:linear-gradient(#a4a4a4 0%,#8e8e8e 30%,#5e5e5e 100%);border-radius:5px;border-top:1px solid #b4b4b4;"></div>
<div style="position:absolute;left:713px;top:983px;width:140.3px;height:36px;background:#c2c048;border-radius:3px;box-shadow:inset 0 1px 2px rgba(0,0,0,0.35);"></div>
<span class="t" style="left:772.41px;top:1025.27px;font-size:11.5px;color:#2e2e2e;transform:scaleX(0.9200);font-weight:bold;">80%</span>
<div style="position:absolute;left:860px;top:978px;width:150px;height:61px;background:linear-gradient(#1c1c1c,#262626 50%,#383838);border-radius:5px;"></div>
<div style="position:absolute;left:865px;top:983px;width:140.3px;height:36px;background:#c4c100;border-radius:3px;box-shadow:inset 0 1px 2px rgba(0,0,0,0.35);"></div>
<span class="t" style="left:921.47px;top:1025.27px;font-size:11.5px;color:#fff;transform:scaleX(0.9200);font-weight:bold;">100%</span>
<div style="position:absolute;left:1597px;top:978px;width:48px;height:61.5px;background:linear-gradient(#a8a8a8 0%,#8a8a8a 30%,#6a6a6a 100%);border-radius:5px;"></div>
<div style="position:absolute;left:1597px;top:996px;width:48px;height:1.2px;background:#4a4a4a;"></div>
<div style="position:absolute;left:1614px;top:979.5px;width:15px;height:15px;border-radius:50%;background:linear-gradient(#6e6e6e,#9a9a9a);"></div>
<div style="position:absolute;left:1605.5px;top:1003px;width:31px;height:31px;border:2.5px solid #222;border-radius:5px;background:linear-gradient(#c0c0c0 0%,#a8a8a8 48%,#888 52%,#999 100%);"></div>
<div style="position:absolute;left:1613.5px;top:1011px;width:15px;height:15px;background:linear-gradient(#222 0%,#111 48%,#000 52%,#000 100%);"></div>
<div style="position:absolute;left:1646.5px;top:978px;width:45.799999999999955px;height:29.5px;background:linear-gradient(#acacac 0%,#909090 40%,#6c6c6c 100%);border-radius:5px 0 0 5px;"></div>
<div style="position:absolute;left:1658.9px;top:982.5px;width:20px;height:20px;border-radius:50%;background:linear-gradient(#6c6c6c,#9c9c9c);"></div>
<div style="position:absolute;left:1692.3px;top:978px;width:44.700000000000045px;height:29.5px;background:linear-gradient(#acacac 0%,#909090 40%,#6c6c6c 100%);border-radius:0;"></div>
<div style="position:absolute;left:1704.15px;top:982.5px;width:20px;height:20px;border-radius:50%;background:linear-gradient(#6c6c6c,#9c9c9c);"></div>
<div style="position:absolute;left:1737px;top:978px;width:45px;height:29.5px;background:linear-gradient(#acacac 0%,#909090 40%,#6c6c6c 100%);border-radius:0;"></div>
<div style="position:absolute;left:1749.0px;top:982.5px;width:20px;height:20px;border-radius:50%;background:linear-gradient(#6c6c6c,#9c9c9c);"></div>
<div style="position:absolute;left:1782px;top:978px;width:45px;height:29.5px;background:linear-gradient(#acacac 0%,#909090 40%,#6c6c6c 100%);border-radius:0;"></div>
<div style="position:absolute;left:1794.0px;top:982.5px;width:20px;height:20px;border-radius:50%;background:linear-gradient(#6c6c6c,#9c9c9c);"></div>
<div style="position:absolute;left:1827px;top:978px;width:45px;height:29.5px;background:linear-gradient(#3a3a3a,#2a2a2a);border-radius:0;"></div>
<div style="position:absolute;left:1839.0px;top:982.5px;width:20px;height:20px;border-radius:50%;background:linear-gradient(#2c2c2c,#383838);"></div>
<div style="position:absolute;left:1872px;top:978px;width:47.5px;height:29.5px;background:linear-gradient(#acacac 0%,#909090 40%,#6c6c6c 100%);border-radius:0 5px 5px 0;"></div>
<div style="position:absolute;left:1885.25px;top:982.5px;width:20px;height:20px;border-radius:50%;background:linear-gradient(#6c6c6c,#9c9c9c);"></div>
<span class="t" style="left:1798.08px;top:983.76px;font-size:18px;color:#2a2a2a;transform:scaleX(1.0000);font-weight:bold;">∞</span>
<div style="position:absolute;left:1646.5px;top:1009px;width:135.5px;height:30.5px;background:linear-gradient(#b0b0b0 0%,#949494 40%,#6e6e6e 100%);border-radius:5px 0 0 5px;"></div>
<div style="position:absolute;left:1783px;top:1009px;width:136.5px;height:30.5px;background:linear-gradient(#b0b0b0 0%,#949494 40%,#6e6e6e 100%);border-radius:0 5px 5px 0;"></div>
<div style="position:absolute;left:1667px;top:1014px;width:20px;height:20px;border-radius:50%;background:linear-gradient(#6c6c6c,#9c9c9c);"></div>
<div style="position:absolute;left:1880px;top:1014px;width:20px;height:20px;border-radius:50%;background:linear-gradient(#6c6c6c,#9c9c9c);"></div>
<span class="t" style="left:1672.27px;top:1015.61px;font-size:17px;color:#222;transform:scaleX(1.0000);">«</span>
<span class="t" style="left:1885.57px;top:1015.61px;font-size:17px;color:#222;transform:scaleX(1.0000);">»</span>
<span class="t" style="left:1703.50px;top:1014.57px;font-size:21.3px;color:#2e2e2e;transform:scaleX(1.0665);-webkit-text-stroke:0.7px #2e2e2e;">Back</span>
<span class="t" style="left:1810.50px;top:1014.57px;font-size:21.3px;color:#2e2e2e;transform:scaleX(1.1874);-webkit-text-stroke:0.7px #2e2e2e;">Next</span>
<div style="position:absolute;left:0px;top:1040px;width:1920px;height:40px;background:#03060d;"></div>
<div style="position:absolute;left:48px;top:1040px;width:344px;height:40px;background:#383838;"></div>
<span class="t" style="left:60.00px;top:1052.80px;font-size:15px;color:#b4b4b4;transform:scaleX(0.9774);">Web und Windows durchsuchen</span>
<div style="position:absolute;left:495px;top:1078px;width:40px;height:2px;background:#76b9ed;"></div>
<div style="position:absolute;left:593px;top:1078px;width:40px;height:2px;background:#76b9ed;"></div>
<div style="position:absolute;left:638px;top:1040px;width:48px;height:40px;background:#3a3d42;"></div>
<div style="position:absolute;left:638px;top:1078px;width:48px;height:2px;background:#76b9ed;"></div>
<span class="t" style="left:1864.75px;top:1045.34px;font-size:12px;color:#fff;transform:scaleX(0.8822);">15:28</span>
<span class="t" style="left:1850.00px;top:1062.34px;font-size:12px;color:#fff;transform:scaleX(0.9155);">14.04.2016</span>
<div style="position:absolute;left:1914.5px;top:1040px;width:1px;height:40px;background:#555;"></div>
<svg width="1920" height="1080" viewBox="0 0 1920 1080"><path d="M219 990h9.4l-4.7-5z" fill="#2a2a2a"/><path d="M1617 990.5h9.4l-4.7-5z" fill="#2a2a2a"/><rect x="1691.7" y="978" width="1.2" height="29.5" fill="#4c4c4c"/><rect x="1736.4" y="978" width="1.2" height="29.5" fill="#4c4c4c"/><rect x="1781.4" y="978" width="1.2" height="29.5" fill="#4c4c4c"/><rect x="1826.4" y="978" width="1.2" height="29.5" fill="#4c4c4c"/><rect x="1871.4" y="978" width="1.2" height="29.5" fill="#4c4c4c"/><rect x="1665" y="988.7" width="8" height="8" fill="#2a2a2a"/><path d="M1711.5 987.5v11l8.5-5.5z" fill="#2a2a2a"/><path d="M1756.2 988.3h-2.200v9.400h2.200M1762.800 988.300h2.200v9.400h-2.200" fill="none" stroke="#2a2a2a" stroke-width="1.500"/><rect x="1756.600" y="992.300" width="1.500" height="1.500" fill="#2a2a2a"/><rect x="1758.800" y="992.300" width="1.500" height="1.500" fill="#2a2a2a"/><rect x="1761" y="992.300" width="1.500" height="1.500" fill="#2a2a2a"/><path d="M1844.6 991.5a5 5 0 0 1 8.6-2.4M1854.4 994.5a5 5 0 0 1-8.6 2.4" stroke="#1c1c1c" stroke-width="2" fill="none"/><path d="M1854.8 986.8v4h-4zM1844.2 999.2v-4h4z" fill="#1c1c1c"/><path d="M16 1053.3l6.5-.9v6.3H16zM23.3 1052.3l8.7-1.3v7.7h-8.7zM16 1059.5h6.5v6.3l-6.5-.9zM23.3 1059.5H32v7.7l-8.7-1.3z" fill="#fff"/><g fill="none" stroke="#fff" stroke-width="1.3"><rect x="410.5" y="1053.5" width="11" height="13"/><path d="M408 1056h-2.500v8h2.500M424 1056h2.500v8h-2.500"/></g><path fill-rule="evenodd" fill="#1b7ad6" d="M456.3 1059.500C457 1052.500 463 1049.600 467.500 1049.800C473 1050.200 476.200 1054.500 476.200 1060V1062.300H462.600C463.200 1066.500 470 1067.800 475.200 1064.600V1068.600C470 1071.300 460.500 1070.800 458.200 1064.200C457.200 1061 458.200 1057.600 461.200 1055.400C459 1056 457.300 1057.300 456.300 1059.500ZM462.800 1058H470.400C470.400 1055 468.600 1053.600 466.600 1053.600C464.600 1053.600 463.100 1055.500 462.800 1058Z"/><path d="M504 1050.500h8l2 2.500h11.500v16h-21.500z" fill="#eebc3a"/><rect x="504" y="1054.500" width="21.500" height="14.500" fill="#fad972"/><path d="M508 1061h13.500v8h-3.500v-4.200h-6.500v4.200h-3.500z" fill="#32a0e6"/><path d="M553 1054h21v17.500l-19.500-2.500z" fill="#fff"/><path d="M558.500 1054c0-7.500 10-7.500 10 0" fill="none" stroke="#fff" stroke-width="1.300"/><path d="M557 1058.500l4.300-.5v4.200h-4.300zM562.300 1057.900l6-.7v5h-6zM557 1063.200h4.300v4.300l-4.300-.6zM562.300 1063.200h6v5.200l-6-.8z" fill="#03060d"/><ellipse cx="610.5" cy="1060.5" rx="10" ry="8.5" fill="#d8e4f0" stroke="#6a88a8" stroke-width="1"/><circle cx="606" cy="1057" r="1.8" fill="#e03030"/><circle cx="611.5" cy="1055.5" r="1.8" fill="#30a030"/><circle cx="605.5" cy="1062.5" r="1.8" fill="#3060d0"/><circle cx="616" cy="1059" r="1.8" fill="#e0c020"/><path d="M622.5 1048l-8 17" stroke="#d08030" stroke-width="2.2"/><path d="M614.5 1065l-1.5 3.5" stroke="#404040" stroke-width="2"/><path d="M656 1048.500l16.500 15-14.500 7.500c-2.500-7-3-15-2-22.500z" fill="#0a4a0a"/><path d="M658 1053l11 10-9.500 5c-1.500-5-2-10-1.500-15z" fill="#0e7a0e"/><text x="661.500" y="1065" font-size="10" font-weight="bold" fill="#4cff4c" text-anchor="middle" font-family="Liberation Sans,sans-serif">5</text><path d="M1726.5 1063l5.5-5.5 5.5 5.5" fill="none" stroke="#fff" stroke-width="1.3"/><g fill="none" stroke="#fff" stroke-width="1.2"><rect x="1752.500" y="1056.500" width="10.500" height="7.800"/><rect x="1754.300" y="1058.200" width="7" height="4.400" fill="#fff" stroke="none"/><path d="M1763.600 1058.800v3.200" stroke-width="1.600"/><path d="M1748.800 1054v2.500M1751.200 1054v2.500" stroke-width="1"/><path d="M1747.800 1056.800h4.400v1.500a2.200 2.200 0 0 1 -4.400 0zM1750 1060.500v3.600h2.500" stroke-width="1.100"/></g><g fill="none" stroke="#fff" stroke-width="1.3"><path d="M1775.5 1066a11 11 0 0 1 11-11"/><path d="M1778.5 1066a8 8 0 0 1 8-8" /><path d="M1781.500 1066a5 5 0 0 1 5-5"/></g><rect x="1784" y="1063.500" width="2.800" height="2.800" fill="#fff"/><path d="M1796.5 1057.500h2.500l3.500-3.500v12l-3.500-3.500h-2.500z" fill="none" stroke="#fff" stroke-width="1.100"/><path d="M1805 1056.500a5 5 0 0 1 0 7M1807.500 1054.500a8 8 0 0 1 0 11" fill="none" stroke="#fff" stroke-width="1"/><path d="M1810 1053a10.500 10.500 0 0 1 0 14" fill="none" stroke="#888" stroke-width="1"/><path d="M1820.500 1052.500h15v11h-5.500l-2 2-2-2h-5.500z" fill="none" stroke="#fff" stroke-width="1.200"/><path d="M1823 1055.500h10.500M1823 1058.400h10.500M1823 1061.300h7.500" stroke="#fff" stroke-width="0.900"/></svg>
</body></html>
